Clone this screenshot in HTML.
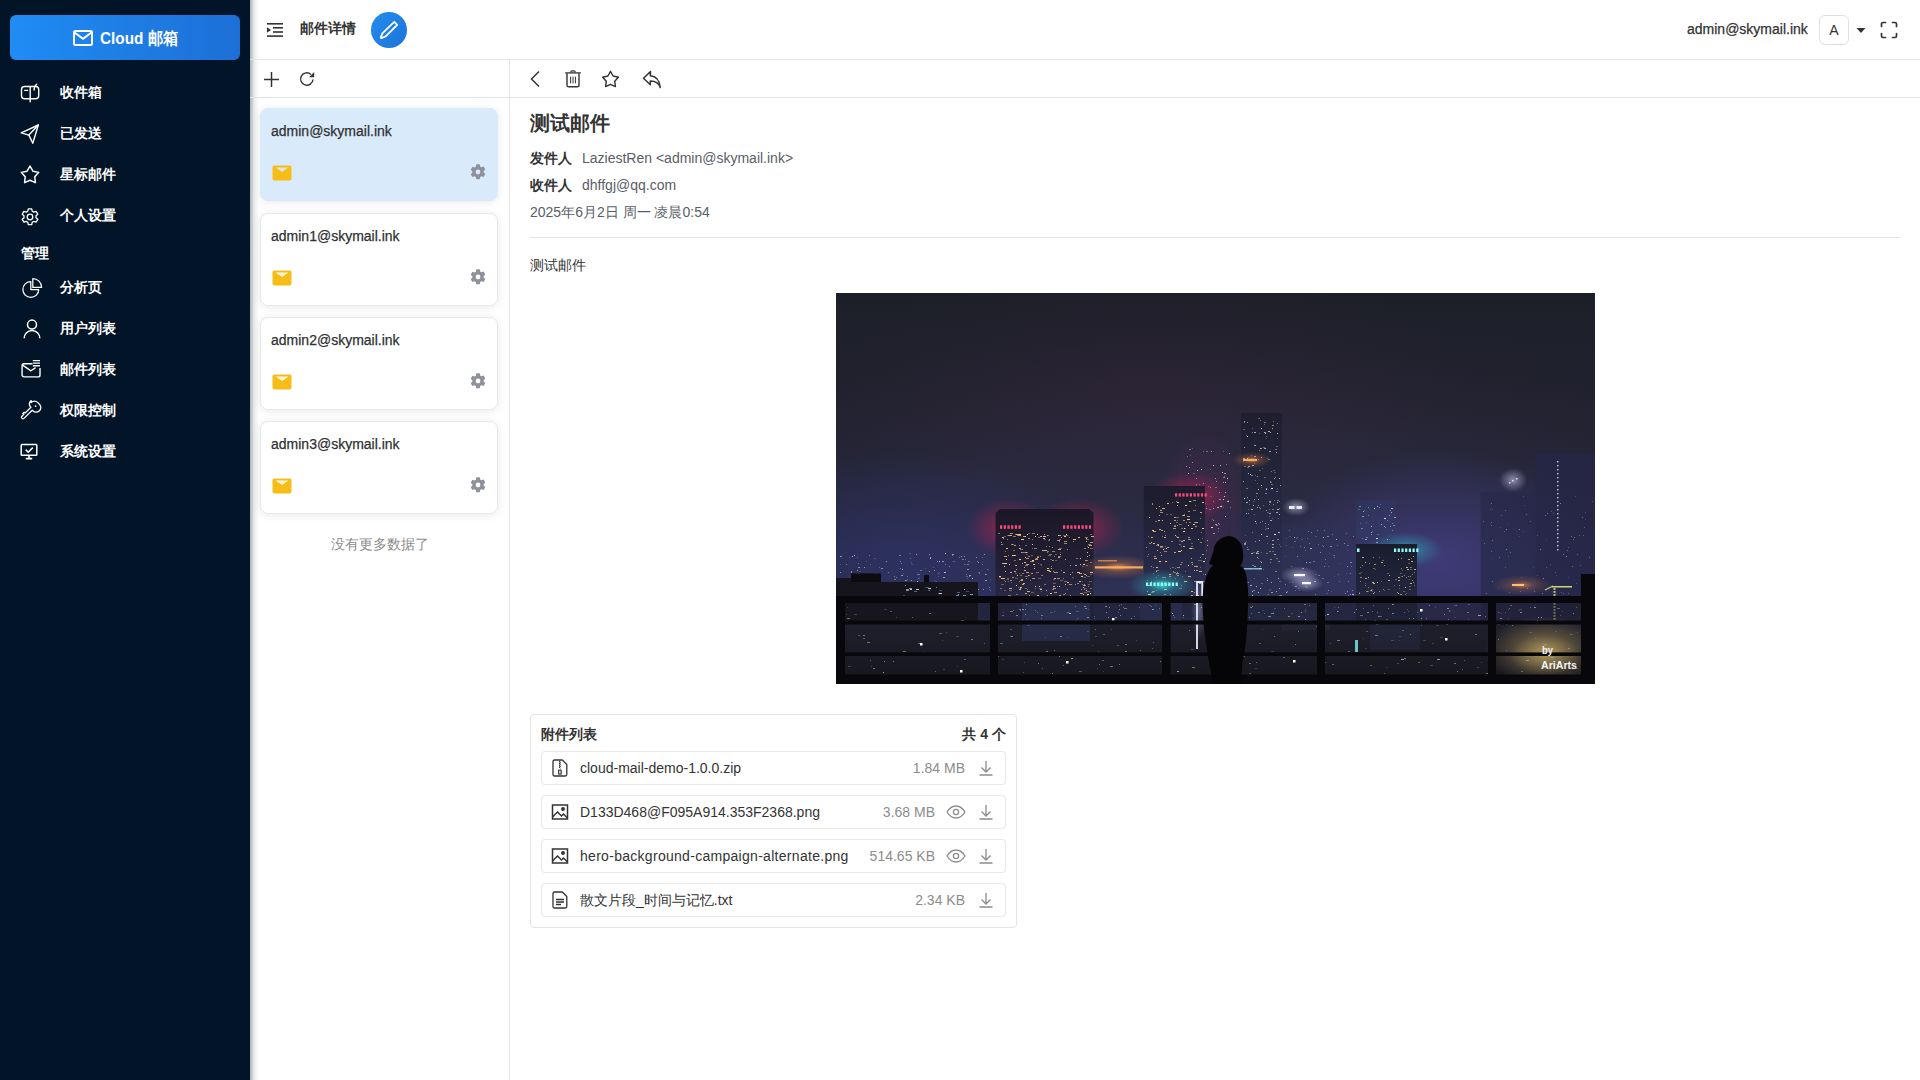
<!DOCTYPE html>
<html><head><meta charset="utf-8">
<style>
*{box-sizing:border-box;margin:0;padding:0}
html,body{width:1920px;height:1080px;overflow:hidden;background:#fff;font-family:"Liberation Sans",sans-serif;color:#303133}
.abs{position:absolute}
#side{position:absolute;left:0;top:0;width:250px;height:1080px;background:#011428}
#logo{position:absolute;left:10px;top:15px;width:230px;height:45px;border-radius:6px;background:linear-gradient(90deg,#1f8cf4,#1d6fd6);color:#fff;font-weight:bold;font-size:17px;display:flex;align-items:center;justify-content:center}
.mi{position:absolute;left:0;width:250px;height:41px;color:#fff;font-size:14px;font-weight:bold}
.mi svg{position:absolute;left:20px;top:10px}
.mi span{position:absolute;left:60px;top:12px}
#shadow{position:absolute;left:250px;top:0;width:9px;height:1080px;background:linear-gradient(90deg,rgba(0,21,41,.32),rgba(0,21,41,.08) 50%,rgba(0,21,41,0))}
.hline{position:absolute;height:1px;background:#e4e4e7}
.card{position:absolute;left:260px;width:238px;height:93px;border-radius:8px;background:#fff;border:1px solid #ebeef5;box-shadow:0 1px 10px rgba(0,0,0,.09)}
.card .em{position:absolute;left:10px;top:17px;font-size:14px;color:#303133}
.att{position:absolute;left:541px;width:465px;height:34px;border:1px solid #e8e8e8;border-radius:4px}
</style></head><body>
<div id="side">
  <div id="logo"></div>
  <svg class="abs" style="left:73px;top:30px" width="20" height="16" viewBox="0 0 20 16"><rect x="1" y="1" width="18" height="14" rx="1.2" fill="none" stroke="#fff" stroke-width="2"/><path d="M1.5 2.5L10 8.8l8.5-6.3" fill="none" stroke="#fff" stroke-width="2"/></svg>
  <div class="abs" style="left:100px;top:27px;font-size:17px;font-weight:bold;color:#fff;transform:scaleX(0.9);transform-origin:0 0;white-space:nowrap">Cloud 邮箱</div>
  <div class="mi" style="top:72px"><svg width="24" height="22" viewBox="0 0 24 22" fill="none" stroke="#fff" stroke-width="1.4" stroke-linecap="round" stroke-linejoin="round"><rect x="1.5" y="4.5" width="17.2" height="12.3" rx="3"/><path d="M10.2 4.8V19.7"/><path d="M14.1 8C14 5.5 15 3.5 16.7 2.2"/><path d="M4.7 8.4h2.9"/></svg><span>收件箱</span></div>
  <div class="mi" style="top:113px"><svg width="24" height="22" viewBox="0 0 24 22" fill="none" stroke="#fff" stroke-width="1.4" stroke-linejoin="round" stroke-linecap="round"><path d="M18.3 2L1.2 9.8l7.7 2.3 3.9 8.1z"/><path d="M18.3 2L8.9 12.1"/></svg><span>已发送</span></div>
  <div class="mi" style="top:154px"><svg width="24" height="22" viewBox="0 0 24 22" fill="none" stroke="#fff" stroke-width="1.5" stroke-linejoin="round"><path d="M10.00 2.00 L12.94 7.15 L18.75 8.36 L14.76 12.75 L15.41 18.64 L10.00 16.20 L4.59 18.64 L5.24 12.75 L1.25 8.36 L7.06 7.15z"/></svg><span>星标邮件</span></div>
  <div class="mi" style="top:195px"><svg style="top:11.5px" width="20" height="20" viewBox="0 0 20 20" fill="none" stroke="#fff" stroke-width="1.3" stroke-linejoin="round"><path d="M8.3 1.8h3.4l.5 2.4 1.6.9 2.3-.8 1.7 2.9-1.8 1.6v1.9l1.8 1.6-1.7 2.9-2.3-.8-1.6.9-.5 2.4H8.3l-.5-2.4-1.6-.9-2.3.8-1.7-2.9 1.8-1.6V8.8L2.2 7.2l1.7-2.9 2.3.8 1.6-.9z"/><circle cx="10" cy="10" r="2.8"/></svg><span>个人设置</span></div>
  <div class="grp" style="position:absolute;left:21px;top:245px;color:#fff;font-size:13.5px;font-weight:bold">管理</div>
  <div class="mi" style="top:267px"><svg width="24" height="22" viewBox="0 0 24 22" fill="none" stroke="#fff" stroke-width="1.25" stroke-linejoin="round"><path d="M10.8 4.6A7.9 7.9 0 1 0 18.7 12.5H10.8z"/><path d="M12.8 1.6A8.8 8.8 0 0 1 21.6 10.4H12.8z"/></svg><span>分析页</span></div>
  <div class="mi" style="top:308px"><svg width="24" height="22" viewBox="0 0 24 22" fill="none" stroke="#fff" stroke-width="1.5"><circle cx="12" cy="6.6" r="4.5"/><path d="M4.2 20.2A7.8 7.8 0 0 1 19.8 20.2"/></svg><span>用户列表</span></div>
  <div class="mi" style="top:349px"><svg width="24" height="22" viewBox="0 0 24 22" fill="none" stroke="#fff" stroke-width="1.4" stroke-linejoin="round"><path d="M12.5 4.8H4.1a2 2 0 0 0-2 2v9.1a2 2 0 0 0 2 2H18a2 2 0 0 0 2-2V9"/><path d="M2.6 6.2L11 11.8l4.6-3.2"/><path d="M12.8 1.6H20M12.8 4.1H20M12.8 6.7H20"/></svg><span>邮件列表</span></div>
  <div class="mi" style="top:390px"><svg width="24" height="22" viewBox="0 0 24 22" fill="none" stroke="#fff" stroke-linejoin="round" stroke-linecap="round"><path d="M11.2 2.6a4.6 4.6 0 0 1 6.6 0l1.6 1.6a4.6 4.6 0 0 1 0 6.6 4.6 4.6 0 0 1-6.6 0l-.6-.6-8.2 8.2a1.3 1.3 0 0 1-1.8 0l-.3-.3a1.3 1.3 0 0 1 0-1.8l1.9-1.9-.9-.9 1.3-1.3.9.9 5.8-5.8-.6-.6a4.6 4.6 0 0 1 .9-6.1z" stroke-width="1.3"/><circle cx="15.6" cy="6.2" r=".9" fill="#fff" stroke="none"/></svg><span>权限控制</span></div>
  <div class="mi" style="top:431px"><svg width="24" height="22" viewBox="0 0 24 22" fill="none" stroke="#fff" stroke-width="1.5"><rect x="1.2" y="3.6" width="15.6" height="10.6" rx=".8"/><path d="M5.6 8.6l2.6 2.6 4.6-4.6"/><path d="M9 14.2v2.6M5.8 17.6h6.4" stroke-width="1.7"/></svg><span>系统设置</span></div>
</div>
<div id="shadow"></div>

<!-- header -->
<svg class="abs" style="left:267px;top:23px" width="16" height="14" viewBox="0 0 16 14"><rect x="0" y="0" width="16" height="1.6" fill="#333"/><rect x="6" y="4" width="10" height="1.6" fill="#333"/><rect x="6" y="8.2" width="10" height="1.6" fill="#333"/><rect x="0" y="12.3" width="16" height="1.6" fill="#333"/><path d="M0 4.3L4 7 0 9.7z" fill="#333"/></svg>
<div class="abs" style="left:300px;top:20px;font-size:14px;font-weight:bold;color:#333">邮件详情</div>
<div class="abs" style="left:371px;top:12px;width:36px;height:36px;border-radius:50%;background:linear-gradient(135deg,#238cf0,#1c74d8)"></div>
<svg class="abs" style="left:379px;top:20px" width="20" height="20" viewBox="0 0 20 20"><path d="M15.2 1.8l3 3L6.5 16.5 2.3 18.2l-.6-.6 1.7-4.2z" fill="none" stroke="#fff" stroke-width="1.8" stroke-linejoin="round"/></svg>
<div class="abs" id="huser" style="left:1687px;top:21px;font-size:14px;color:#333;-webkit-text-stroke:0.25px #333">admin@skymail.ink</div>
<div class="abs" style="left:1819px;top:15px;width:30px;height:30px;border:1px solid #dcdfe6;border-radius:6px;font-size:14px;color:#333;text-align:center;line-height:28px">A</div>
<svg class="abs" style="left:1856px;top:27px" width="10" height="7" viewBox="0 0 10 7"><path d="M0.5 1h9L5 6z" fill="#333"/></svg>
<svg class="abs" style="left:1880px;top:21px" width="18" height="18" viewBox="0 0 18 18" fill="none" stroke="#333" stroke-width="1.7" stroke-linecap="round" stroke-linejoin="round"><path d="M1.5 5.5V3a1.5 1.5 0 0 1 1.5-1.5h2.5M12.5 1.5H15A1.5 1.5 0 0 1 16.5 3v2.5M16.5 12.5V15a1.5 1.5 0 0 1-1.5 1.5h-2.5M5.5 16.5H3A1.5 1.5 0 0 1 1.5 15v-2.5"/></svg>
<div class="hline" style="left:250px;top:59px;width:1670px"></div>
<!-- list toolbar -->
<svg class="abs" style="left:264px;top:72px" width="15" height="15" viewBox="0 0 15 15" stroke="#333" stroke-width="1.5"><path d="M7.5 0v15M0 7.5h15"/></svg>
<svg class="abs" style="left:299px;top:71px" width="16" height="16" viewBox="0 0 16 16" fill="none" stroke="#333" stroke-width="1.4"><path d="M14 8.5A6.2 6.2 0 1 1 12 3.4"/><path d="M15.2 1v5.2H10z" fill="#333" stroke="none"/></svg>
<div class="hline" style="left:250px;top:97px;width:1670px"></div>
<div class="abs" style="left:509px;top:60px;width:1px;height:1020px;background:#e4e4e7"></div>
<div class="card" style="top:108px;background:#d9eafb;border-color:#d9eafb"></div>
<div class="abs" style="left:271px;top:123px;font-size:14px;color:#303133;-webkit-text-stroke:0.25px #303133">admin@skymail.ink</div>
<svg class="abs" style="left:272px;top:165px" width="20" height="16" viewBox="0 0 20 16"><rect x="0.5" y="0.5" width="19" height="15" rx="2" fill="#f6bd16"/><path d="M3.5 2.5h13L10 7z" fill="#d9eafb" opacity=".85"/></svg>
<svg class="abs" style="left:470px;top:164px" width="16" height="16" viewBox="0 0 16 16"><path fill="#8e9199" fill-rule="evenodd" d="M6.3 0.3h3.4l.5 2.2 1.3.75 2.1-.7 1.7 2.95-1.65 1.5v1.5l1.65 1.5-1.7 2.95-2.1-.7-1.3.75-.5 2.2H6.3l-.5-2.2-1.3-.75-2.1.7L.7 10.3l1.65-1.5V7.2L.7 5.7 2.4 2.75l2.1.7 1.3-.75zM8 5.6a2.4 2.4 0 1 0 0 4.8 2.4 2.4 0 0 0 0-4.8z"/></svg>
<div class="card" style="top:212.5px;background:#fff;border-color:#e8e9ee"></div>
<div class="abs" style="left:271px;top:227.5px;font-size:14px;color:#303133;-webkit-text-stroke:0.25px #303133">admin1@skymail.ink</div>
<svg class="abs" style="left:272px;top:269.5px" width="20" height="16" viewBox="0 0 20 16"><rect x="0.5" y="0.5" width="19" height="15" rx="2" fill="#f6bd16"/><path d="M3.5 2.5h13L10 7z" fill="#fff" opacity=".85"/></svg>
<svg class="abs" style="left:470px;top:268.5px" width="16" height="16" viewBox="0 0 16 16"><path fill="#8e9199" fill-rule="evenodd" d="M6.3 0.3h3.4l.5 2.2 1.3.75 2.1-.7 1.7 2.95-1.65 1.5v1.5l1.65 1.5-1.7 2.95-2.1-.7-1.3.75-.5 2.2H6.3l-.5-2.2-1.3-.75-2.1.7L.7 10.3l1.65-1.5V7.2L.7 5.7 2.4 2.75l2.1.7 1.3-.75zM8 5.6a2.4 2.4 0 1 0 0 4.8 2.4 2.4 0 0 0 0-4.8z"/></svg>
<div class="card" style="top:316.5px;background:#fff;border-color:#e8e9ee"></div>
<div class="abs" style="left:271px;top:331.5px;font-size:14px;color:#303133;-webkit-text-stroke:0.25px #303133">admin2@skymail.ink</div>
<svg class="abs" style="left:272px;top:373.5px" width="20" height="16" viewBox="0 0 20 16"><rect x="0.5" y="0.5" width="19" height="15" rx="2" fill="#f6bd16"/><path d="M3.5 2.5h13L10 7z" fill="#fff" opacity=".85"/></svg>
<svg class="abs" style="left:470px;top:372.5px" width="16" height="16" viewBox="0 0 16 16"><path fill="#8e9199" fill-rule="evenodd" d="M6.3 0.3h3.4l.5 2.2 1.3.75 2.1-.7 1.7 2.95-1.65 1.5v1.5l1.65 1.5-1.7 2.95-2.1-.7-1.3.75-.5 2.2H6.3l-.5-2.2-1.3-.75-2.1.7L.7 10.3l1.65-1.5V7.2L.7 5.7 2.4 2.75l2.1.7 1.3-.75zM8 5.6a2.4 2.4 0 1 0 0 4.8 2.4 2.4 0 0 0 0-4.8z"/></svg>
<div class="card" style="top:420.5px;background:#fff;border-color:#e8e9ee"></div>
<div class="abs" style="left:271px;top:435.5px;font-size:14px;color:#303133;-webkit-text-stroke:0.25px #303133">admin3@skymail.ink</div>
<svg class="abs" style="left:272px;top:477.5px" width="20" height="16" viewBox="0 0 20 16"><rect x="0.5" y="0.5" width="19" height="15" rx="2" fill="#f6bd16"/><path d="M3.5 2.5h13L10 7z" fill="#fff" opacity=".85"/></svg>
<svg class="abs" style="left:470px;top:476.5px" width="16" height="16" viewBox="0 0 16 16"><path fill="#8e9199" fill-rule="evenodd" d="M6.3 0.3h3.4l.5 2.2 1.3.75 2.1-.7 1.7 2.95-1.65 1.5v1.5l1.65 1.5-1.7 2.95-2.1-.7-1.3.75-.5 2.2H6.3l-.5-2.2-1.3-.75-2.1.7L.7 10.3l1.65-1.5V7.2L.7 5.7 2.4 2.75l2.1.7 1.3-.75zM8 5.6a2.4 2.4 0 1 0 0 4.8 2.4 2.4 0 0 0 0-4.8z"/></svg>
<div class="abs" style="left:331px;top:536px;font-size:14px;color:#8c8c8c">没有更多数据了</div>

<!-- detail toolbar -->
<svg class="abs" style="left:529px;top:70px" width="12" height="18" viewBox="0 0 12 18" fill="none" stroke="#333" stroke-width="1.5"><path d="M10 1.5L2.5 9l7.5 7.5"/></svg>
<svg class="abs" style="left:564px;top:70px" width="18" height="18" viewBox="0 0 18 18" fill="none" stroke="#333" stroke-linejoin="round"><path d="M1.2 2.9h15.6" stroke-width="1.3"/><path d="M6.8 2.6V2a1.2 1.2 0 0 1 1.2-1.2h2A1.2 1.2 0 0 1 11.2 2v.6" stroke-width="1.2"/><path d="M3 3.2v12a1.6 1.6 0 0 0 1.6 1.6h8.8a1.6 1.6 0 0 0 1.6-1.6v-12" stroke-width="1.4"/><path d="M6.6 6.6v6.8M9 6.6v6.8M11.4 6.6v6.8" stroke-width="1"/></svg>
<svg class="abs" style="left:601px;top:70px" width="19" height="19" viewBox="0 0 19 19" fill="none" stroke="#333" stroke-width="1.4" stroke-linejoin="round"><path d="M9.5 1.3l2.6 4.7 5.3 1.2-3.7 4 .7 5.4-4.9-2.3-4.9 2.3.7-5.4-3.7-4 5.3-1.2z"/></svg>
<svg class="abs" style="left:642px;top:70px" width="20" height="19" viewBox="0 0 20 19" fill="none" stroke="#333" stroke-width="1.5" stroke-linejoin="round"><path d="M8.5 1.5L1.5 8.2l6.8 6.5V11c5 0 8.3 1.5 10 6.5C17.5 10 13.5 6.2 8.3 5.8z"/></svg>
<!-- mail header -->
<div class="abs" style="left:530px;top:110px;font-size:20px;font-weight:bold;color:#333">测试邮件</div>
<div class="abs" style="left:530px;top:150px;font-size:14px;font-weight:bold;color:#333">发件人</div>
<div class="abs" style="left:582px;top:150px;font-size:14px;color:#595e66">LaziestRen &lt;admin@skymail.ink&gt;</div>
<div class="abs" style="left:530px;top:177px;font-size:14px;font-weight:bold;color:#333">收件人</div>
<div class="abs" style="left:582px;top:177px;font-size:14px;color:#595e66">dhffgj@qq.com</div>
<div class="abs" style="left:530px;top:204px;font-size:14px;color:#595e66">2025年6月2日 周一 凌晨0:54</div>
<div class="hline" style="left:530px;top:237px;width:1370px;background:#e6e6e6"></div>
<div class="abs" style="left:530px;top:257px;font-size:14px;color:#333">测试邮件</div>
<div id="img" class="abs" style="left:836px;top:293px;width:759px;height:391px;background:#2a2838;overflow:hidden"><svg width="759" height="391" viewBox="0 0 759 391">
<defs>
<linearGradient id="sky" x1="0" y1="0" x2="0" y2="1">
<stop offset="0" stop-color="#20222c"/><stop offset="0.3" stop-color="#272636"/><stop offset="0.55" stop-color="#2a2a42"/><stop offset="0.75" stop-color="#2e3054"/><stop offset="1" stop-color="#30325c"/></linearGradient>
<radialGradient id="gR"><stop offset="0" stop-color="#ff2a5a" stop-opacity=".75"/><stop offset=".4" stop-color="#d02050" stop-opacity=".35"/><stop offset="1" stop-color="#d02050" stop-opacity="0"/></radialGradient>
<radialGradient id="gT"><stop offset="0" stop-color="#40fff0" stop-opacity=".8"/><stop offset=".4" stop-color="#30c0d0" stop-opacity=".35"/><stop offset="1" stop-color="#30c0d0" stop-opacity="0"/></radialGradient>
<radialGradient id="gO"><stop offset="0" stop-color="#ffa050" stop-opacity=".8"/><stop offset=".4" stop-color="#e08040" stop-opacity=".3"/><stop offset="1" stop-color="#e08040" stop-opacity="0"/></radialGradient>
<radialGradient id="gW"><stop offset="0" stop-color="#e0e0ff" stop-opacity=".55"/><stop offset="1" stop-color="#c0c0e0" stop-opacity="0"/></radialGradient>
<radialGradient id="gY"><stop offset="0" stop-color="#d8b868" stop-opacity=".6"/><stop offset="1" stop-color="#c8a860" stop-opacity="0"/></radialGradient>
<radialGradient id="gP"><stop offset="0" stop-color="#423e82" stop-opacity=".8"/><stop offset="1" stop-color="#423e82" stop-opacity="0"/></radialGradient>
<radialGradient id="gB"><stop offset="0" stop-color="#2c3266" stop-opacity=".7"/><stop offset="1" stop-color="#2c3266" stop-opacity="0"/></radialGradient>
<radialGradient id="gPk"><stop offset="0" stop-color="#6a2a58" stop-opacity=".55"/><stop offset="1" stop-color="#6a2a58" stop-opacity="0"/></radialGradient>
<radialGradient id="vig" cx=".5" cy=".75" r=".75"><stop offset=".55" stop-color="#101018" stop-opacity="0"/><stop offset="1" stop-color="#141820" stop-opacity=".3"/></radialGradient>
<linearGradient id="bA" x1="0" y1="0" x2="0" y2="1"><stop offset="0" stop-color="#1b1726"/><stop offset=".5" stop-color="#231f36"/><stop offset="1" stop-color="#2c2f52"/></linearGradient>
<linearGradient id="bB" x1="0" y1="0" x2="0" y2="1"><stop offset="0" stop-color="#1d1b2c"/><stop offset="1" stop-color="#2e355c"/></linearGradient>
<linearGradient id="bD" x1="0" y1="0" x2="0" y2="1"><stop offset="0" stop-color="#1e1e2e"/><stop offset="1" stop-color="#2e355c"/></linearGradient>
<linearGradient id="bE" x1="0" y1="0" x2="0" y2="1"><stop offset="0" stop-color="#1a1d2e"/><stop offset="1" stop-color="#262c4a"/></linearGradient>
<linearGradient id="low" x1="0" y1="0" x2="0" y2="1"><stop offset="0" stop-color="#1f1f2c"/><stop offset="1" stop-color="#16161d"/></linearGradient>
<filter id="bl2" x="-50%" y="-50%" width="200%" height="200%"><feGaussianBlur stdDeviation="1.5"/></filter>
</defs>
<rect width="759" height="391" fill="url(#sky)"/>
<rect width="759" height="391" fill="url(#vig)"/>
<ellipse cx="64" cy="267" rx="200" ry="110" fill="url(#gB)"/>
<ellipse cx="604" cy="267" rx="170" ry="110" fill="url(#gP)"/>
<ellipse cx="314" cy="87" rx="320" ry="130" fill="url(#gPk)" opacity="0.18"/>
<rect x="644.7" y="199.0" width="54.8" height="133.0" fill="#272948" opacity="0.7"/>
<rect x="699.5" y="161.0" width="60.5" height="171.0" fill="#252746" opacity="0.8"/>
<rect x="721.0" y="168.0" width="1.5" height="1.5" fill="#d8d8f8" opacity="0.85"/>
<rect x="721.0" y="172.0" width="1.5" height="1.5" fill="#d8d8f8" opacity="0.85"/>
<rect x="721.0" y="176.0" width="1.5" height="1.5" fill="#d8d8f8" opacity="0.85"/>
<rect x="721.0" y="180.0" width="1.5" height="1.5" fill="#d8d8f8" opacity="0.85"/>
<rect x="721.0" y="184.0" width="1.5" height="1.5" fill="#d8d8f8" opacity="0.85"/>
<rect x="721.0" y="188.0" width="1.5" height="1.5" fill="#d8d8f8" opacity="0.85"/>
<rect x="721.0" y="192.0" width="1.5" height="1.5" fill="#d8d8f8" opacity="0.85"/>
<rect x="721.0" y="196.0" width="1.5" height="1.5" fill="#d8d8f8" opacity="0.85"/>
<rect x="721.0" y="200.0" width="1.5" height="1.5" fill="#d8d8f8" opacity="0.85"/>
<rect x="721.0" y="204.0" width="1.5" height="1.5" fill="#d8d8f8" opacity="0.85"/>
<rect x="721.0" y="208.0" width="1.5" height="1.5" fill="#d8d8f8" opacity="0.85"/>
<rect x="721.0" y="212.0" width="1.5" height="1.5" fill="#d8d8f8" opacity="0.85"/>
<rect x="721.0" y="216.0" width="1.5" height="1.5" fill="#d8d8f8" opacity="0.85"/>
<rect x="721.0" y="220.0" width="1.5" height="1.5" fill="#d8d8f8" opacity="0.85"/>
<rect x="721.0" y="224.0" width="1.5" height="1.5" fill="#d8d8f8" opacity="0.85"/>
<rect x="721.0" y="228.0" width="1.5" height="1.5" fill="#d8d8f8" opacity="0.85"/>
<rect x="721.0" y="232.0" width="1.5" height="1.5" fill="#d8d8f8" opacity="0.85"/>
<rect x="721.0" y="236.0" width="1.5" height="1.5" fill="#d8d8f8" opacity="0.85"/>
<rect x="721.0" y="240.0" width="1.5" height="1.5" fill="#d8d8f8" opacity="0.85"/>
<rect x="721.0" y="244.0" width="1.5" height="1.5" fill="#d8d8f8" opacity="0.85"/>
<rect x="721.0" y="248.0" width="1.5" height="1.5" fill="#d8d8f8" opacity="0.85"/>
<rect x="721.0" y="252.0" width="1.5" height="1.5" fill="#d8d8f8" opacity="0.85"/>
<rect x="721.0" y="256.0" width="1.5" height="1.5" fill="#d8d8f8" opacity="0.85"/>
<ellipse cx="677" cy="187" rx="14" ry="12" fill="url(#gW)"/>
<rect x="673.0" y="189.0" width="1.5" height="1.5" fill="#e8e8ff" opacity="0.85"/>
<rect x="676.0" y="187.0" width="1.5" height="1.5" fill="#e8e8ff" opacity="0.85"/>
<rect x="680.0" y="185.0" width="1.5" height="1.5" fill="#e8e8ff" opacity="0.85"/>
<ellipse cx="369" cy="212" rx="45" ry="75" fill="url(#gPk)" opacity="0.9"/>
<rect x="346.0" y="149.0" width="49.0" height="183.0" fill="#2e2848" opacity="0.35"/>
<rect x="520.0" y="207.0" width="39.0" height="125.0" fill="#303c66" opacity="0.45"/>
<rect x="446.0" y="232.0" width="74.0" height="100.0" fill="#2d3356" opacity="0.35"/>
<path fill="#e0e0ff" opacity="0.34" d="M71 283h1v1h-1zM132 268h2v1h-2zM129 266h1v1h-1zM109 271h1v1h-1zM133 283h1v1h-1zM74 298h1v1h-1zM154 297h1v1h-1zM83 281h1v1h-1zM149 281h2v1h-2zM74 265h1v1h-1zM39 280h2v1h-2zM17 294h2v1h-2zM124 289h2v1h-2zM61 300h2v1h-2z"/>
<path fill="#8890c8" opacity="0.75" d="M123 264h1v1h-1zM130 281h1v1h-1zM153 294h1v1h-1zM2 295h1v1h-1zM81 281h2v1h-2zM60 284h1v1h-1zM64 268h1v1h-1zM21 281h2v1h-2zM52 279h1v1h-1zM64 275h1v1h-1zM138 296h1v1h-1zM10 271h1v1h-1zM116 262h1v1h-1zM126 266h2v1h-2z"/>
<path fill="#a8b0e0" opacity="0.52" d="M84 297h2v1h-2zM34 298h1v1h-1zM141 268h1v1h-1zM65 270h1v1h-1zM113 273h1v1h-1zM102 280h1v1h-1zM22 270h1v1h-1zM64 290h1v1h-1zM84 277h2v1h-2z"/>
<path fill="#c8b890" opacity="0.75" d="M149 287h2v1h-2zM106 268h2v1h-2zM25 297h2v1h-2zM107 284h2v1h-2zM28 274h1v1h-1zM147 296h1v1h-1zM65 282h2v1h-2zM133 282h2v1h-2zM50 298h1v1h-1zM141 291h1v1h-1zM116 261h2v1h-2z"/>
<path fill="#a8b0e0" opacity="0.75" d="M128 263h1v1h-1zM80 261h1v1h-1zM131 276h2v1h-2zM53 300h1v1h-1zM30 301h1v1h-1zM29 290h1v1h-1zM75 287h1v1h-1zM148 261h1v1h-1zM15 279h1v1h-1zM4 263h2v1h-2zM22 274h2v1h-2zM45 275h2v1h-2zM123 300h1v1h-1zM4 279h1v1h-1zM101 268h1v1h-1zM142 269h1v1h-1zM50 268h1v1h-1zM109 300h1v1h-1zM21 277h1v1h-1zM93 261h1v1h-1zM94 264h1v1h-1zM125 263h1v1h-1zM141 296h2v1h-2z"/>
<path fill="#8890c8" opacity="0.34" d="M93 292h1v1h-1zM103 279h1v1h-1zM19 281h1v1h-1zM23 278h2v1h-2zM153 296h1v1h-1zM98 287h1v1h-1zM32 294h1v1h-1zM89 275h1v1h-1zM73 260h2v1h-2zM4 271h1v1h-1zM75 271h2v1h-2zM99 288h2v1h-2zM38 265h2v1h-2z"/>
<path fill="#a8b0e0" opacity="0.34" d="M151 276h2v1h-2zM75 269h1v1h-1zM128 271h2v1h-2zM71 286h1v1h-1zM42 289h1v1h-1zM109 296h1v1h-1zM102 283h1v1h-1zM154 286h1v1h-1z"/>
<path fill="#8890c8" opacity="0.52" d="M32 288h1v1h-1zM34 271h1v1h-1zM142 279h2v1h-2zM88 296h1v1h-1zM139 300h2v1h-2zM130 283h2v1h-2zM37 288h2v1h-2zM31 284h1v1h-1zM82 285h2v1h-2z"/>
<path fill="#e0e0ff" opacity="0.75" d="M109 260h1v1h-1zM66 276h1v1h-1zM136 285h1v1h-1zM108 279h2v1h-2zM103 268h1v1h-1zM81 288h1v1h-1zM72 298h1v1h-1zM18 262h1v1h-1zM16 263h1v1h-1zM17 293h1v1h-1zM94 265h1v1h-1z"/>
<path fill="#c8b890" opacity="0.34" d="M13 264h1v1h-1zM24 285h1v1h-1zM43 274h1v1h-1zM146 264h1v1h-1zM87 294h2v1h-2zM21 264h1v1h-1zM131 285h1v1h-1zM97 274h1v1h-1zM30 268h1v1h-1zM67 280h1v1h-1zM117 268h2v1h-2z"/>
<path fill="#c8b890" opacity="0.52" d="M58 286h2v1h-2zM26 286h2v1h-2zM58 283h1v1h-1zM85 290h1v1h-1zM143 280h1v1h-1zM146 271h1v1h-1zM79 291h1v1h-1zM5 285h1v1h-1zM63 262h2v1h-2zM33 262h1v1h-1zM131 271h2v1h-2z"/>
<path fill="#e0e0ff" opacity="0.52" d="M140 264h1v1h-1zM15 278h1v1h-1zM149 281h1v1h-1zM93 278h1v1h-1zM98 277h1v1h-1zM69 287h2v1h-2z"/>
<path fill="#8a92c8" opacity="0.55" d="M647 228h1v1h-1zM694 228h1v1h-1zM648 250h1v1h-1zM727 261h1v1h-1zM711 220h1v1h-1zM698 298h1v1h-1zM731 257h1v1h-1zM717 220h1v1h-1zM741 261h1v1h-1zM753 264h1v1h-1z"/>
<path fill="#8a92c8" opacity="0.25" d="M671 230h1v1h-1zM732 284h1v1h-1zM720 282h1v1h-1zM656 265h1v1h-1zM749 226h1v1h-1zM710 247h1v1h-1zM656 216h1v1h-1zM683 243h1v1h-1zM697 274h1v1h-1zM662 294h1v1h-1z"/>
<path fill="#a0a8d8" opacity="0.39" d="M673 299h1v1h-1zM655 258h1v1h-1zM714 271h1v1h-1zM748 234h1v1h-1zM732 254h1v1h-1zM732 300h1v1h-1zM665 222h1v1h-1zM756 208h1v1h-1zM747 242h1v1h-1zM701 242h1v1h-1zM750 290h1v1h-1zM753 297h1v1h-1zM655 232h1v1h-1zM744 272h1v1h-1zM669 274h1v1h-1zM710 274h1v1h-1z"/>
<path fill="#c0c8f0" opacity="0.55" d="M670 236h1v1h-1zM691 295h1v1h-1zM707 285h1v1h-1zM704 256h1v1h-1zM730 263h1v1h-1zM724 210h1v1h-1zM670 256h1v1h-1zM683 236h1v1h-1z"/>
<path fill="#c0c8f0" opacity="0.39" d="M737 246h1v1h-1zM746 224h1v1h-1zM690 221h1v1h-1zM655 210h1v1h-1zM738 244h1v1h-1zM684 298h1v1h-1zM736 273h1v1h-1zM655 229h1v1h-1zM735 243h1v1h-1zM663 264h1v1h-1zM669 217h1v1h-1zM674 259h1v1h-1z"/>
<path fill="#a0a8d8" opacity="0.25" d="M720 300h1v1h-1zM688 212h1v1h-1zM739 203h1v1h-1zM687 238h1v1h-1zM756 281h1v1h-1zM664 234h1v1h-1z"/>
<path fill="#a0a8d8" opacity="0.55" d="M706 300h1v1h-1zM656 247h1v1h-1zM650 300h1v1h-1zM709 222h1v1h-1zM656 288h1v1h-1z"/>
<path fill="#8a92c8" opacity="0.39" d="M701 282h1v1h-1zM687 203h1v1h-1zM719 279h1v1h-1zM743 242h1v1h-1zM725 299h1v1h-1z"/>
<path fill="#c0c8f0" opacity="0.25" d="M740 290h1v1h-1zM668 238h1v1h-1zM654 216h1v1h-1zM685 284h1v1h-1zM715 218h1v1h-1zM672 263h1v1h-1zM727 300h1v1h-1zM749 219h1v1h-1z"/>
<path fill="#f0e0b0" opacity="0.8" d="M389 189h1v1h-1zM359 198h1v1h-1zM386 179h1v1h-1zM391 208h2v1h-2zM365 176h1v1h-1zM358 197h2v1h-2zM351 281h2v1h-2zM360 281h2v1h-2zM377 172h1v1h-1zM376 277h1v1h-1zM361 289h2v1h-2z"/>
<path fill="#ffffff" opacity="0.56" d="M375 275h1v1h-1zM370 215h1v1h-1zM381 288h2v1h-2zM387 189h1v1h-1zM384 172h1v1h-1zM368 221h1v1h-1zM389 199h1v1h-1zM377 290h1v1h-1zM353 218h2v1h-2zM376 274h2v1h-2zM371 252h1v1h-1zM369 281h1v1h-1zM381 214h2v1h-2zM361 177h1v1h-1zM389 249h2v1h-2zM350 234h1v1h-1zM351 223h1v1h-1zM377 215h1v1h-1zM390 278h1v1h-1zM374 194h1v1h-1zM361 302h1v1h-1zM558 224h2v1h-2zM555 215h2v1h-2zM541 213h1v1h-1zM529 246h2v1h-2zM527 218h1v1h-1zM535 233h1v1h-1zM555 219h1v1h-1zM551 246h1v1h-1z"/>
<path fill="#d0b0c0" opacity="0.36" d="M356 301h1v1h-1zM365 235h1v1h-1zM377 258h2v1h-2zM357 180h2v1h-2zM354 266h1v1h-1zM376 226h1v1h-1zM369 210h1v1h-1zM382 289h1v1h-1zM392 207h1v1h-1zM360 192h1v1h-1zM359 202h2v1h-2zM356 155h1v1h-1z"/>
<path fill="#70d0e8" opacity="0.8" d="M387 289h1v1h-1zM383 199h1v1h-1zM359 295h2v1h-2zM361 249h1v1h-1zM369 265h1v1h-1zM365 194h2v1h-2zM393 160h1v1h-1zM349 213h1v1h-1z"/>
<path fill="#ffffff" opacity="0.36" d="M367 158h1v1h-1zM372 193h1v1h-1zM361 265h1v1h-1zM360 229h1v1h-1zM360 191h1v1h-1zM391 283h2v1h-2zM554 290h1v1h-1zM554 217h1v1h-1zM545 292h1v1h-1zM535 241h1v1h-1zM556 237h1v1h-1zM526 292h1v1h-1zM523 213h2v1h-2zM556 258h1v1h-1z"/>
<path fill="#d0b0c0" opacity="0.8" d="M367 203h1v1h-1zM359 198h2v1h-2zM356 301h1v1h-1zM361 235h1v1h-1zM379 231h2v1h-2zM388 180h2v1h-2zM377 240h2v1h-2zM367 208h2v1h-2zM367 190h1v1h-1zM371 247h1v1h-1zM382 230h1v1h-1zM383 206h2v1h-2zM365 300h2v1h-2zM350 282h2v1h-2zM360 185h1v1h-1z"/>
<path fill="#70d0e8" opacity="0.36" d="M374 203h2v1h-2zM378 294h2v1h-2zM382 238h1v1h-1zM356 282h2v1h-2zM362 194h2v1h-2zM368 232h1v1h-1zM387 158h1v1h-1zM367 232h1v1h-1zM362 217h1v1h-1zM373 280h2v1h-2zM354 162h1v1h-1zM354 202h1v1h-1zM374 176h1v1h-1zM385 212h1v1h-1zM387 214h1v1h-1z"/>
<path fill="#ffffff" opacity="0.8" d="M384 213h2v1h-2zM389 223h1v1h-1zM387 206h1v1h-1zM388 203h1v1h-1zM375 234h2v1h-2zM373 281h1v1h-1zM353 281h1v1h-1zM391 185h1v1h-1zM354 280h2v1h-2zM352 217h1v1h-1zM348 235h1v1h-1zM362 280h1v1h-1zM352 180h1v1h-1zM540 245h2v1h-2zM533 279h1v1h-1zM553 282h1v1h-1zM533 272h1v1h-1zM548 225h2v1h-2zM537 256h2v1h-2zM538 215h1v1h-1z"/>
<path fill="#f0e0b0" opacity="0.36" d="M374 289h2v1h-2zM362 276h1v1h-1zM351 163h1v1h-1zM370 158h2v1h-2zM350 217h2v1h-2zM370 257h1v1h-1zM385 299h2v1h-2zM371 293h1v1h-1zM351 227h1v1h-1zM363 209h1v1h-1zM357 246h1v1h-1zM354 202h2v1h-2z"/>
<path fill="#f0e0b0" opacity="0.56" d="M368 289h1v1h-1zM380 188h1v1h-1zM366 242h1v1h-1zM375 158h1v1h-1zM350 173h1v1h-1zM389 257h1v1h-1zM377 227h1v1h-1zM377 208h1v1h-1zM351 219h1v1h-1zM379 185h1v1h-1zM356 169h1v1h-1zM358 225h2v1h-2zM353 174h1v1h-1z"/>
<path fill="#d0b0c0" opacity="0.56" d="M380 232h2v1h-2zM384 272h1v1h-1zM394 267h1v1h-1zM374 290h1v1h-1zM392 283h2v1h-2zM353 156h2v1h-2zM380 298h1v1h-1zM387 184h2v1h-2zM381 214h2v1h-2zM351 223h1v1h-1zM349 232h2v1h-2zM382 235h1v1h-1z"/>
<path fill="#70d0e8" opacity="0.56" d="M388 183h1v1h-1zM357 299h2v1h-2zM350 213h2v1h-2zM373 216h2v1h-2zM381 289h1v1h-1zM383 231h1v1h-1zM390 171h1v1h-1zM363 191h1v1h-1zM361 263h1v1h-1zM394 214h1v1h-1zM379 194h2v1h-2zM366 273h1v1h-1z"/>
<path fill="#60c8e0" opacity="0.8" d="M534 260h1v1h-1zM532 214h1v1h-1zM529 296h1v1h-1zM540 302h1v1h-1zM558 262h2v1h-2zM526 223h2v1h-2zM544 290h1v1h-1z"/>
<path fill="#60c8e0" opacity="0.56" d="M534 280h2v1h-2zM537 300h1v1h-1zM541 290h1v1h-1zM557 232h2v1h-2zM550 256h1v1h-1zM532 222h1v1h-1zM546 252h1v1h-1zM545 275h1v1h-1zM530 244h2v1h-2zM523 290h1v1h-1zM537 262h1v1h-1z"/>
<path fill="#90c0e8" opacity="0.36" d="M550 293h1v1h-1zM541 241h2v1h-2zM533 269h2v1h-2zM532 291h1v1h-1zM544 211h1v1h-1zM547 283h2v1h-2zM524 230h1v1h-1zM541 261h1v1h-1z"/>
<path fill="#60c8e0" opacity="0.36" d="M536 296h1v1h-1zM557 296h2v1h-2zM546 250h1v1h-1zM530 229h1v1h-1zM522 216h2v1h-2zM534 294h2v1h-2zM528 217h1v1h-1zM546 283h2v1h-2zM525 284h1v1h-1zM527 262h1v1h-1zM530 284h2v1h-2zM536 238h1v1h-1zM546 292h2v1h-2z"/>
<path fill="#90c0e8" opacity="0.56" d="M549 251h1v1h-1zM551 227h1v1h-1zM556 230h1v1h-1zM543 214h1v1h-1zM525 235h2v1h-2zM554 233h1v1h-1zM549 234h1v1h-1zM526 245h1v1h-1z"/>
<path fill="#90c0e8" opacity="0.8" d="M553 222h1v1h-1zM548 233h1v1h-1zM556 267h1v1h-1zM535 239h1v1h-1zM540 249h2v1h-2zM545 231h1v1h-1zM549 266h2v1h-2zM557 302h1v1h-1zM539 292h1v1h-1zM526 295h1v1h-1z"/>
<path fill="#a8b0d8" opacity="0.27" d="M449 263h1v1h-1zM493 260h1v1h-1zM450 245h1v1h-1zM450 299h2v1h-2zM465 246h2v1h-2zM470 294h2v1h-2zM479 281h2v1h-2zM511 257h1v1h-1zM463 297h1v1h-1zM450 252h1v1h-1zM456 254h1v1h-1z"/>
<path fill="#70b8d8" opacity="0.27" d="M490 300h2v1h-2zM492 273h2v1h-2zM448 285h1v1h-1zM479 286h1v1h-1zM479 243h2v1h-2zM453 243h2v1h-2zM498 283h1v1h-1zM495 298h1v1h-1zM504 270h1v1h-1zM489 270h1v1h-1zM456 289h2v1h-2zM510 280h1v1h-1z"/>
<path fill="#ffffff" opacity="0.6" d="M474 255h2v1h-2zM470 269h1v1h-1zM500 246h1v1h-1zM478 288h2v1h-2zM516 301h2v1h-2zM450 299h1v1h-1zM487 244h1v1h-1zM458 244h1v1h-1z"/>
<path fill="#ffffff" opacity="0.42" d="M508 250h1v1h-1zM449 291h1v1h-1zM489 266h1v1h-1zM461 263h1v1h-1zM511 298h1v1h-1zM468 254h1v1h-1zM514 269h2v1h-2zM466 275h2v1h-2zM484 259h1v1h-1zM494 253h2v1h-2zM511 273h1v1h-1z"/>
<path fill="#a8b0d8" opacity="0.42" d="M496 241h1v1h-1zM515 273h1v1h-1zM471 245h1v1h-1zM497 262h2v1h-2zM469 293h2v1h-2zM455 273h1v1h-1zM477 268h2v1h-2zM511 252h2v1h-2zM459 297h1v1h-1zM502 281h1v1h-1zM501 252h1v1h-1zM462 295h1v1h-1z"/>
<path fill="#70b8d8" opacity="0.42" d="M468 303h1v1h-1zM486 252h1v1h-1zM453 289h1v1h-1zM460 245h1v1h-1zM512 302h1v1h-1zM503 288h1v1h-1z"/>
<path fill="#a8b0d8" opacity="0.6" d="M492 297h1v1h-1zM491 243h2v1h-2zM487 253h1v1h-1zM459 293h2v1h-2zM514 280h1v1h-1zM473 269h2v1h-2zM514 301h1v1h-1zM509 300h1v1h-1zM516 297h1v1h-1zM475 239h1v1h-1z"/>
<path fill="#70b8d8" opacity="0.6" d="M481 237h1v1h-1zM451 298h1v1h-1zM488 273h1v1h-1zM479 301h1v1h-1zM517 243h1v1h-1zM512 288h1v1h-1zM482 282h2v1h-2zM473 250h1v1h-1zM488 237h1v1h-1zM472 238h1v1h-1z"/>
<path fill="#ffffff" opacity="0.27" d="M464 253h1v1h-1zM498 264h1v1h-1zM482 251h1v1h-1zM486 285h2v1h-2zM510 240h1v1h-1zM453 237h1v1h-1zM491 289h2v1h-2zM458 248h2v1h-2zM469 257h1v1h-1zM461 244h1v1h-1z"/>
<ellipse cx="172" cy="235" rx="42" ry="30" fill="url(#gR)"/>
<ellipse cx="242" cy="235" rx="46" ry="30" fill="url(#gR)"/>
<path d="M159.5 332V220L164 216H253L257.5 220V332z" fill="url(#bA)"/>
<path fill="#c8b8a0" opacity="0.66" d="M216 258h3v1h-3zM221 247h3v1h-3zM216 267h2v1h-2zM167 245h1v1h-1zM186 259h2v1h-2zM250 282h1v1h-1zM211 302h1v1h-1zM169 258h1v1h-1zM172 302h3v1h-3zM196 268h2v1h-2zM253 262h1v1h-1zM248 292h2v1h-2zM231 256h1v1h-1zM165 251h2v1h-2zM198 255h3v1h-3zM183 252h1v1h-1zM239 291h1v1h-1zM215 273h1v1h-1zM216 254h1v1h-1zM234 302h1v1h-1zM186 256h1v1h-1zM172 262h1v1h-1zM210 253h1v1h-1zM204 263h1v1h-1zM248 255h2v1h-2zM200 279h1v1h-1zM221 293h1v1h-1zM211 242h1v1h-1zM192 263h2v1h-2zM241 290h2v1h-2zM171 246h1v1h-1z"/>
<path fill="#ffd888" opacity="0.95" d="M250 245h1v1h-1zM199 243h1v1h-1zM214 300h2v1h-2zM173 271h1v1h-1zM228 243h2v1h-2zM183 266h2v1h-2zM208 243h2v1h-2zM183 241h2v1h-2zM196 267h2v1h-2zM211 275h2v1h-2zM180 292h1v1h-1zM163 283h2v1h-2zM181 282h1v1h-1zM222 242h1v1h-1zM189 264h1v1h-1zM244 271h1v1h-1zM176 262h3v1h-3zM188 243h2v1h-2zM168 273h1v1h-1zM196 251h1v1h-1zM168 270h3v1h-3zM247 271h2v1h-2zM250 297h1v1h-1zM245 283h2v1h-2zM251 301h2v1h-2zM191 241h1v1h-1zM252 254h1v1h-1zM254 300h1v1h-1zM185 246h3v1h-3zM170 266h1v1h-1zM251 259h1v1h-1z"/>
<path fill="#ffd888" opacity="0.66" d="M248 303h1v1h-1zM178 252h2v1h-2zM217 278h1v1h-1zM185 286h2v1h-2zM225 244h1v1h-1zM223 302h2v1h-2zM196 285h3v1h-3zM247 292h2v1h-2zM217 295h3v1h-3zM190 271h3v1h-3zM213 246h1v1h-1zM187 290h2v1h-2zM198 303h2v1h-2zM174 240h3v1h-3zM224 261h1v1h-1zM229 266h1v1h-1zM218 279h3v1h-3zM220 279h2v1h-2z"/>
<path fill="#c8b8a0" opacity="0.95" d="M195 305h2v1h-2zM208 257h1v1h-1zM188 274h1v1h-1zM184 296h1v1h-1zM183 296h2v1h-2zM183 255h2v1h-2zM206 257h3v1h-3zM188 277h2v1h-2zM166 270h3v1h-3zM173 295h3v1h-3zM191 298h3v1h-3zM218 285h2v1h-2zM234 281h1v1h-1zM207 266h2v1h-2zM255 243h3v1h-3zM239 272h2v1h-2zM227 279h2v1h-2zM222 264h2v1h-2zM208 241h1v1h-1zM210 297h1v1h-1zM215 275h1v1h-1zM253 252h3v1h-3zM222 264h1v1h-1zM167 285h2v1h-2zM179 262h1v1h-1zM189 259h2v1h-2zM204 243h2v1h-2zM173 242h3v1h-3zM178 278h2v1h-2zM207 245h2v1h-2zM174 279h2v1h-2zM209 257h2v1h-2z"/>
<path fill="#f0c870" opacity="0.43" d="M180 301h2v1h-2zM183 280h1v1h-1zM171 286h2v1h-2zM223 255h3v1h-3zM181 242h1v1h-1zM196 255h1v1h-1zM189 295h2v1h-2zM188 259h1v1h-1zM208 246h2v1h-2zM254 281h2v1h-2zM173 297h3v1h-3zM190 259h2v1h-2zM230 242h2v1h-2zM211 242h2v1h-2zM251 298h3v1h-3zM228 288h3v1h-3zM184 256h2v1h-2zM202 244h2v1h-2zM195 262h2v1h-2zM254 295h2v1h-2zM248 284h2v1h-2zM212 247h2v1h-2z"/>
<path fill="#f0c870" opacity="0.95" d="M199 293h1v1h-1zM201 302h2v1h-2zM192 282h1v1h-1zM188 269h2v1h-2zM184 294h2v1h-2zM247 301h1v1h-1zM220 303h2v1h-2zM201 241h1v1h-1zM166 244h2v1h-2zM251 263h1v1h-1zM180 241h3v1h-3zM213 278h2v1h-2zM242 244h2v1h-2zM247 294h1v1h-1zM223 293h1v1h-1zM198 275h1v1h-1zM207 243h1v1h-1zM231 289h2v1h-2zM176 251h1v1h-1zM244 265h1v1h-1zM241 279h3v1h-3zM204 296h2v1h-2zM237 246h3v1h-3zM211 277h3v1h-3zM170 255h2v1h-2zM229 291h1v1h-1zM197 271h2v1h-2zM217 293h2v1h-2zM203 293h1v1h-1zM254 279h3v1h-3zM243 288h2v1h-2zM230 241h1v1h-1zM250 248h1v1h-1zM165 285h3v1h-3z"/>
<path fill="#d8a860" opacity="0.66" d="M179 241h1v1h-1zM186 280h2v1h-2zM211 259h1v1h-1zM190 285h1v1h-1zM227 285h1v1h-1zM192 282h2v1h-2zM218 263h1v1h-1zM200 265h2v1h-2zM225 277h1v1h-1zM162 240h2v1h-2zM249 267h3v1h-3zM213 253h1v1h-1zM174 279h1v1h-1zM216 296h2v1h-2zM196 246h1v1h-1zM172 242h2v1h-2zM222 263h3v1h-3zM252 251h3v1h-3zM227 301h2v1h-2zM231 296h1v1h-1zM175 251h3v1h-3zM184 282h2v1h-2zM249 244h3v1h-3zM183 288h1v1h-1zM205 282h2v1h-2zM196 240h3v1h-3zM189 272h3v1h-3zM211 258h2v1h-2zM177 243h3v1h-3z"/>
<path fill="#d8a860" opacity="0.43" d="M220 261h1v1h-1zM214 266h2v1h-2zM171 285h2v1h-2zM191 283h1v1h-1zM182 294h1v1h-1zM179 285h3v1h-3zM248 299h3v1h-3zM202 285h3v1h-3zM252 291h2v1h-2zM251 253h1v1h-1zM217 286h2v1h-2zM224 259h1v1h-1zM227 242h3v1h-3zM247 280h1v1h-1zM191 296h1v1h-1zM246 288h1v1h-1zM163 284h2v1h-2zM199 295h1v1h-1zM253 288h3v1h-3zM219 267h2v1h-2zM236 284h2v1h-2zM205 272h1v1h-1zM179 280h2v1h-2zM195 299h3v1h-3zM248 295h3v1h-3zM168 297h2v1h-2zM190 261h2v1h-2z"/>
<path fill="#ffd888" opacity="0.43" d="M250 272h2v1h-2zM202 270h1v1h-1zM233 244h1v1h-1zM208 291h2v1h-2zM246 303h1v1h-1zM254 255h3v1h-3zM250 246h3v1h-3zM254 241h2v1h-2zM194 287h1v1h-1zM250 282h1v1h-1zM189 283h2v1h-2zM220 299h1v1h-1zM177 257h2v1h-2zM201 279h2v1h-2zM246 291h1v1h-1zM213 261h3v1h-3zM201 263h2v1h-2zM240 265h2v1h-2zM223 248h1v1h-1zM254 269h2v1h-2zM252 293h1v1h-1zM194 304h3v1h-3zM178 267h2v1h-2zM164 295h2v1h-2z"/>
<path fill="#c8b8a0" opacity="0.43" d="M172 288h1v1h-1zM246 273h2v1h-2zM251 283h3v1h-3zM199 265h2v1h-2zM204 271h2v1h-2zM246 303h1v1h-1zM217 290h3v1h-3zM189 252h2v1h-2zM212 262h3v1h-3zM221 247h3v1h-3zM192 240h2v1h-2zM249 267h2v1h-2zM184 287h3v1h-3zM171 242h2v1h-2zM224 287h3v1h-3zM203 295h3v1h-3zM251 302h1v1h-1zM219 261h1v1h-1zM165 291h3v1h-3zM168 243h2v1h-2zM223 246h2v1h-2zM175 289h1v1h-1zM198 273h1v1h-1zM172 303h1v1h-1zM168 287h1v1h-1zM205 298h1v1h-1zM218 293h1v1h-1z"/>
<path fill="#d8a860" opacity="0.95" d="M185 287h2v1h-2zM248 281h2v1h-2zM186 291h2v1h-2zM182 242h3v1h-3zM254 249h3v1h-3zM199 266h3v1h-3zM185 259h1v1h-1zM223 242h2v1h-2zM195 280h2v1h-2zM180 276h1v1h-1zM186 270h1v1h-1zM179 272h2v1h-2zM184 295h1v1h-1zM222 256h3v1h-3zM165 249h1v1h-1zM169 278h1v1h-1zM189 300h2v1h-2zM187 243h2v1h-2zM243 280h3v1h-3zM168 263h3v1h-3zM190 279h3v1h-3zM245 300h2v1h-2zM201 264h2v1h-2z"/>
<path fill="#f0c870" opacity="0.66" d="M174 287h2v1h-2zM233 291h3v1h-3zM187 290h2v1h-2zM192 245h2v1h-2zM248 291h1v1h-1zM228 248h3v1h-3zM194 268h3v1h-3zM228 250h3v1h-3zM176 284h2v1h-2zM190 265h3v1h-3zM229 300h1v1h-1zM193 302h1v1h-1zM191 304h1v1h-1zM244 300h1v1h-1zM221 285h3v1h-3zM234 272h1v1h-1zM236 279h1v1h-1zM248 296h1v1h-1zM245 296h1v1h-1zM218 299h3v1h-3zM237 248h1v1h-1zM169 288h1v1h-1z"/>
<rect x="164.0" y="232.3" width="2.2" height="3.5" fill="#ff4a78"/>
<rect x="167.7" y="232.3" width="2.2" height="3.5" fill="#ff4a78"/>
<rect x="171.4" y="232.3" width="2.2" height="3.5" fill="#ff4a78"/>
<rect x="175.1" y="232.3" width="2.2" height="3.5" fill="#ff4a78"/>
<rect x="178.8" y="232.3" width="2.2" height="3.5" fill="#ff4a78"/>
<rect x="182.5" y="232.3" width="2.2" height="3.5" fill="#ff4a78"/>
<rect x="227.0" y="232.3" width="2.2" height="3.5" fill="#ff4a78"/>
<rect x="230.7" y="232.3" width="2.2" height="3.5" fill="#ff4a78"/>
<rect x="234.4" y="232.3" width="2.2" height="3.5" fill="#ff4a78"/>
<rect x="238.1" y="232.3" width="2.2" height="3.5" fill="#ff4a78"/>
<rect x="241.8" y="232.3" width="2.2" height="3.5" fill="#ff4a78"/>
<rect x="245.5" y="232.3" width="2.2" height="3.5" fill="#ff4a78"/>
<rect x="249.2" y="232.3" width="2.2" height="3.5" fill="#ff4a78"/>
<rect x="252.9" y="232.3" width="2.2" height="3.5" fill="#ff4a78"/>
<ellipse cx="282" cy="274" rx="40" ry="12" fill="url(#gO)"/>
<rect x="259.0" y="273.3" width="48.0" height="2.2" fill="#ffb060" opacity="0.95"/>
<rect x="262.0" y="267.0" width="19.0" height="1.5" fill="#e89858" opacity="0.75"/>
<ellipse cx="354" cy="203" rx="40" ry="24" fill="url(#gR)"/>
<rect x="307.7" y="193.0" width="61.3" height="139.0" fill="url(#bB)"/>
<path fill="#f0c870" opacity="0.95" d="M345 257h1v1h-1zM320 274h2v1h-2zM341 244h2v1h-2zM315 249h1v1h-1zM322 227h2v1h-2zM317 250h2v1h-2zM326 227h1v1h-1zM339 242h1v1h-1zM366 209h2v1h-2zM355 298h2v1h-2zM362 246h1v1h-1zM348 288h3v1h-3zM329 268h2v1h-2zM331 210h2v1h-2zM333 281h2v1h-2zM355 235h2v1h-2zM353 208h2v1h-2z"/>
<path fill="#d8b080" opacity="0.95" d="M328 290h1v1h-1zM330 291h1v1h-1zM363 290h2v1h-2zM320 278h1v1h-1zM318 265h3v1h-3zM312 292h2v1h-2zM315 244h2v1h-2zM364 219h2v1h-2zM360 273h2v1h-2zM352 283h3v1h-3zM328 244h2v1h-2zM353 255h3v1h-3zM317 238h3v1h-3zM323 236h2v1h-2zM323 213h1v1h-1zM321 257h1v1h-1zM320 215h1v1h-1zM338 224h2v1h-2zM347 247h2v1h-2zM324 217h2v1h-2zM356 271h1v1h-1zM361 302h2v1h-2zM363 278h3v1h-3zM345 248h2v1h-2zM338 259h2v1h-2zM325 262h1v1h-1zM347 253h2v1h-2zM326 215h3v1h-3z"/>
<path fill="#ffd888" opacity="0.95" d="M327 256h1v1h-1zM341 212h1v1h-1zM357 231h2v1h-2zM366 235h2v1h-2zM341 209h2v1h-2zM343 258h2v1h-2zM367 268h2v1h-2zM330 255h1v1h-1zM351 226h3v1h-3zM323 268h2v1h-2zM354 255h2v1h-2zM352 232h1v1h-1zM334 230h1v1h-1zM347 238h2v1h-2zM342 258h2v1h-2zM349 212h2v1h-2zM348 235h1v1h-1zM316 237h2v1h-2zM313 224h1v1h-1zM312 301h3v1h-3zM328 296h3v1h-3zM322 252h1v1h-1zM352 272h1v1h-1z"/>
<path fill="#ffd888" opacity="0.43" d="M359 212h1v1h-1zM343 251h2v1h-2zM360 298h2v1h-2zM367 281h1v1h-1zM319 228h2v1h-2zM315 288h1v1h-1zM312 243h1v1h-1zM341 227h1v1h-1zM335 304h2v1h-2zM338 232h2v1h-2zM362 302h1v1h-1zM355 255h3v1h-3zM347 222h2v1h-2zM353 229h2v1h-2zM348 221h1v1h-1zM312 261h1v1h-1zM348 235h2v1h-2zM315 299h1v1h-1zM334 275h1v1h-1zM357 217h3v1h-3zM316 299h2v1h-2zM329 253h1v1h-1z"/>
<path fill="#ffd888" opacity="0.66" d="M359 229h3v1h-3zM324 253h3v1h-3zM321 251h2v1h-2zM364 264h1v1h-1zM316 298h3v1h-3zM341 282h2v1h-2zM358 273h3v1h-3zM355 302h2v1h-2zM366 261h2v1h-2zM359 233h2v1h-2zM338 227h2v1h-2zM311 298h1v1h-1zM355 265h1v1h-1zM333 283h2v1h-2zM314 289h1v1h-1zM346 222h3v1h-3zM328 238h1v1h-1zM341 232h1v1h-1zM338 233h2v1h-2zM325 237h2v1h-2zM360 277h2v1h-2zM337 235h3v1h-3zM347 227h2v1h-2zM351 223h3v1h-3zM358 277h1v1h-1zM315 289h1v1h-1z"/>
<path fill="#d8b080" opacity="0.66" d="M313 250h2v1h-2zM345 292h1v1h-1zM358 299h1v1h-1zM324 217h1v1h-1zM320 284h1v1h-1zM315 273h1v1h-1zM337 278h1v1h-1zM326 284h3v1h-3zM357 207h3v1h-3zM328 301h2v1h-2zM335 248h2v1h-2zM365 239h1v1h-1zM316 210h1v1h-1zM349 304h1v1h-1zM364 249h2v1h-2zM310 254h1v1h-1zM328 258h3v1h-3zM340 243h1v1h-1zM336 209h1v1h-1zM344 271h2v1h-2zM324 259h1v1h-1zM327 284h3v1h-3zM341 279h1v1h-1zM340 208h1v1h-1zM352 283h2v1h-2zM364 225h1v1h-1zM317 274h1v1h-1z"/>
<path fill="#f0c870" opacity="0.66" d="M350 229h1v1h-1zM334 301h1v1h-1zM358 288h2v1h-2zM318 263h2v1h-2zM341 292h1v1h-1zM323 222h1v1h-1zM331 254h2v1h-2zM316 211h1v1h-1zM340 280h3v1h-3zM324 219h3v1h-3zM352 246h3v1h-3zM329 242h1v1h-1zM341 274h3v1h-3zM355 269h2v1h-2zM328 296h1v1h-1zM352 218h2v1h-2zM352 244h2v1h-2z"/>
<path fill="#f0c870" opacity="0.43" d="M358 229h3v1h-3zM349 278h1v1h-1zM311 263h1v1h-1zM345 235h2v1h-2zM326 243h1v1h-1zM343 231h3v1h-3zM366 245h1v1h-1zM355 253h2v1h-2zM336 274h2v1h-2zM320 277h3v1h-3zM345 253h1v1h-1zM324 254h3v1h-3zM311 287h1v1h-1zM337 279h3v1h-3zM340 229h2v1h-2zM343 295h3v1h-3zM364 274h1v1h-1zM320 297h1v1h-1zM320 252h2v1h-2zM340 281h1v1h-1zM339 275h1v1h-1zM317 280h1v1h-1zM345 269h2v1h-2z"/>
<path fill="#d8b080" opacity="0.43" d="M341 304h3v1h-3zM362 267h3v1h-3zM321 303h2v1h-2zM327 294h1v1h-1zM365 267h1v1h-1zM340 224h3v1h-3zM330 221h2v1h-2zM355 250h2v1h-2zM334 221h2v1h-2zM328 255h1v1h-1zM339 285h1v1h-1zM366 288h3v1h-3zM343 247h2v1h-2zM322 282h1v1h-1zM355 208h1v1h-1zM346 283h1v1h-1zM323 289h1v1h-1z"/>
<rect x="339.0" y="200.3" width="2.2" height="3.3" fill="#ff4a78"/>
<rect x="342.7" y="200.3" width="2.2" height="3.3" fill="#ff4a78"/>
<rect x="346.4" y="200.3" width="2.2" height="3.3" fill="#ff4a78"/>
<rect x="350.1" y="200.3" width="2.2" height="3.3" fill="#ff4a78"/>
<rect x="353.8" y="200.3" width="2.2" height="3.3" fill="#ff4a78"/>
<rect x="357.5" y="200.3" width="2.2" height="3.3" fill="#ff4a78"/>
<rect x="361.2" y="200.3" width="2.2" height="3.3" fill="#ff4a78"/>
<rect x="364.9" y="200.3" width="2.2" height="3.3" fill="#ff4a78"/>
<rect x="368.6" y="200.3" width="2.2" height="3.3" fill="#ff4a78"/>
<ellipse cx="326" cy="292" rx="34" ry="16" fill="url(#gT)"/>
<rect x="310.0" y="289.5" width="2.2" height="3.5" fill="#8ffff5"/>
<rect x="313.7" y="289.5" width="2.2" height="3.5" fill="#8ffff5"/>
<rect x="317.4" y="289.5" width="2.2" height="3.5" fill="#8ffff5"/>
<rect x="321.1" y="289.5" width="2.2" height="3.5" fill="#8ffff5"/>
<rect x="324.8" y="289.5" width="2.2" height="3.5" fill="#8ffff5"/>
<rect x="328.5" y="289.5" width="2.2" height="3.5" fill="#8ffff5"/>
<rect x="332.2" y="289.5" width="2.2" height="3.5" fill="#8ffff5"/>
<rect x="335.9" y="289.5" width="2.2" height="3.5" fill="#8ffff5"/>
<rect x="339.6" y="289.5" width="2.2" height="3.5" fill="#8ffff5"/>
<rect x="405.0" y="120.0" width="41.0" height="212.0" fill="url(#bD)"/>
<path fill="#e8c888" opacity="0.85" d="M413 207h1v1h-1zM418 139h2v1h-2zM425 192h1v1h-1zM425 241h1v1h-1zM432 138h2v1h-2zM422 196h1v1h-1zM420 260h1v1h-1zM424 295h1v1h-1zM441 140h1v1h-1zM441 216h2v1h-2zM414 275h1v1h-1zM416 302h1v1h-1zM416 172h2v1h-2zM415 216h2v1h-2zM425 164h1v1h-1zM425 269h1v1h-1zM415 260h2v1h-2zM417 212h1v1h-1z"/>
<path fill="#ffffff" opacity="0.59" d="M428 139h2v1h-2zM443 185h1v1h-1zM421 264h1v1h-1zM429 230h1v1h-1zM420 293h1v1h-1zM440 219h2v1h-2zM434 139h1v1h-1zM438 185h1v1h-1zM434 227h2v1h-2zM440 159h1v1h-1zM422 299h1v1h-1zM442 239h1v1h-1zM436 251h2v1h-2zM442 285h1v1h-1zM431 287h1v1h-1zM408 128h1v1h-1zM410 209h2v1h-2zM425 135h1v1h-1zM412 173h2v1h-2zM416 298h1v1h-1zM418 206h1v1h-1zM422 206h1v1h-1zM443 221h1v1h-1z"/>
<path fill="#ffffff" opacity="0.38" d="M443 208h1v1h-1zM441 246h2v1h-2zM433 258h2v1h-2zM426 303h1v1h-1zM409 249h1v1h-1zM439 184h1v1h-1zM428 129h2v1h-2zM433 211h1v1h-1zM434 189h2v1h-2zM431 285h1v1h-1zM420 259h1v1h-1zM436 254h1v1h-1zM424 273h1v1h-1z"/>
<path fill="#d8a878" opacity="0.59" d="M423 214h1v1h-1zM434 269h1v1h-1zM424 155h1v1h-1zM424 127h1v1h-1zM422 212h1v1h-1zM411 254h1v1h-1zM441 207h2v1h-2zM430 260h2v1h-2zM437 128h1v1h-1zM424 229h1v1h-1zM408 129h1v1h-1zM439 156h2v1h-2zM440 298h1v1h-1zM440 265h2v1h-2zM424 268h1v1h-1zM439 278h2v1h-2zM410 195h2v1h-2zM426 228h1v1h-1zM432 166h2v1h-2zM416 239h1v1h-1z"/>
<path fill="#a8b8e0" opacity="0.38" d="M429 236h1v1h-1zM420 203h1v1h-1zM423 140h1v1h-1zM417 259h2v1h-2zM412 216h1v1h-1zM412 164h1v1h-1zM430 235h2v1h-2zM440 153h2v1h-2zM410 248h1v1h-1zM418 221h1v1h-1zM407 136h2v1h-2zM415 162h1v1h-1zM419 187h1v1h-1zM428 131h1v1h-1zM419 182h1v1h-1zM411 174h2v1h-2zM421 190h1v1h-1zM431 250h1v1h-1zM409 289h1v1h-1zM443 288h2v1h-2zM407 168h1v1h-1zM430 145h1v1h-1zM418 285h1v1h-1zM427 154h2v1h-2zM427 276h1v1h-1zM431 219h2v1h-2z"/>
<path fill="#d8a878" opacity="0.38" d="M433 297h1v1h-1zM413 211h1v1h-1zM436 225h1v1h-1zM425 290h2v1h-2zM416 135h1v1h-1zM441 195h1v1h-1zM438 179h2v1h-2zM444 253h1v1h-1zM431 301h2v1h-2zM408 294h1v1h-1zM430 143h1v1h-1zM433 209h2v1h-2zM437 177h2v1h-2zM422 265h1v1h-1zM441 145h1v1h-1zM434 296h1v1h-1zM417 208h1v1h-1zM443 251h1v1h-1zM418 170h1v1h-1zM409 242h1v1h-1z"/>
<path fill="#d8a878" opacity="0.85" d="M436 135h1v1h-1zM424 155h2v1h-2zM408 250h2v1h-2zM436 247h2v1h-2zM421 214h1v1h-1zM432 235h1v1h-1zM433 220h2v1h-2zM433 208h2v1h-2zM430 243h2v1h-2zM430 195h1v1h-1zM435 299h2v1h-2zM421 260h2v1h-2zM430 217h1v1h-1z"/>
<path fill="#a8b8e0" opacity="0.85" d="M418 273h2v1h-2zM407 188h1v1h-1zM428 155h2v1h-2zM442 239h2v1h-2zM429 140h1v1h-1zM418 152h2v1h-2zM414 292h2v1h-2zM433 158h2v1h-2zM411 204h1v1h-1zM412 180h1v1h-1zM435 289h1v1h-1zM410 220h1v1h-1zM441 209h1v1h-1zM407 165h2v1h-2zM418 163h2v1h-2zM443 295h1v1h-1zM438 261h2v1h-2zM444 192h1v1h-1zM408 154h1v1h-1zM421 258h2v1h-2zM423 247h1v1h-1z"/>
<path fill="#e8c888" opacity="0.38" d="M429 233h1v1h-1zM425 259h1v1h-1zM436 195h1v1h-1zM408 173h2v1h-2zM427 304h1v1h-1zM431 165h1v1h-1zM427 212h1v1h-1zM433 216h1v1h-1zM421 259h1v1h-1zM443 302h1v1h-1zM440 298h1v1h-1zM442 225h1v1h-1zM438 207h1v1h-1zM428 184h2v1h-2zM410 142h1v1h-1zM436 258h2v1h-2zM433 223h1v1h-1zM422 166h1v1h-1zM422 125h2v1h-2zM425 194h1v1h-1zM426 175h1v1h-1zM435 191h2v1h-2zM423 177h2v1h-2z"/>
<path fill="#a8b8e0" opacity="0.59" d="M444 302h2v1h-2zM436 216h2v1h-2zM411 289h2v1h-2zM434 209h1v1h-1zM434 188h1v1h-1zM416 272h2v1h-2zM435 178h1v1h-1zM415 182h2v1h-2zM440 198h2v1h-2zM420 230h1v1h-1zM416 139h1v1h-1zM425 303h2v1h-2zM411 256h2v1h-2zM423 275h2v1h-2zM429 200h2v1h-2zM417 297h2v1h-2zM443 215h1v1h-1z"/>
<path fill="#e8c888" opacity="0.59" d="M421 183h1v1h-1zM424 215h1v1h-1zM423 157h1v1h-1zM436 132h2v1h-2zM419 248h1v1h-1zM436 254h2v1h-2zM412 220h1v1h-1zM436 132h1v1h-1zM411 129h1v1h-1zM434 266h2v1h-2zM437 211h1v1h-1zM442 268h2v1h-2zM408 251h2v1h-2zM425 241h1v1h-1zM441 130h1v1h-1zM432 231h1v1h-1zM420 200h2v1h-2z"/>
<path fill="#ffffff" opacity="0.85" d="M411 143h1v1h-1zM408 205h1v1h-1zM430 196h1v1h-1zM438 241h2v1h-2zM411 165h1v1h-1zM423 275h2v1h-2zM414 181h1v1h-1zM419 228h1v1h-1zM435 195h2v1h-2z"/>
<ellipse cx="416" cy="167" rx="20" ry="8" fill="url(#gO)"/>
<rect x="407.0" y="166.0" width="14.0" height="2.0" fill="#ffb060" opacity="0.95"/>
<rect x="407.0" y="275.0" width="19.0" height="1.5" fill="#a0d8f0" opacity="0.8"/>
<rect x="453.0" y="213.0" width="5.5" height="3.0" fill="#f8f8ff"/>
<rect x="460.5" y="213.0" width="5.5" height="3.0" fill="#f8f8ff"/>
<ellipse cx="460" cy="214" rx="14" ry="9" fill="url(#gW)"/>
<ellipse cx="463.5" cy="282" rx="19" ry="9" fill="url(#gW)"/>
<rect x="458.0" y="281.0" width="11.0" height="2.2" fill="#f8f8ff"/>
<ellipse cx="470.5" cy="290" rx="17" ry="9" fill="url(#gW)"/>
<rect x="466.0" y="289.0" width="9.0" height="2.2" fill="#f8f8ff"/>
<ellipse cx="569" cy="257" rx="38" ry="18" fill="url(#gT)"/>
<rect x="520.0" y="251.0" width="61.0" height="81.0" fill="url(#bE)"/>
<path fill="#e8c070" opacity="0.9" d="M562 266h1v1h-1zM552 287h2v1h-2zM571 276h2v1h-2zM578 276h2v1h-2zM562 300h1v1h-1zM570 274h2v1h-2zM526 264h2v1h-2zM569 294h1v1h-1zM575 268h2v1h-2zM537 290h2v1h-2zM553 282h1v1h-1zM541 289h1v1h-1zM537 300h1v1h-1zM568 304h2v1h-2zM535 297h1v1h-1zM562 284h2v1h-2zM574 290h2v1h-2z"/>
<path fill="#e8c070" opacity="0.63" d="M576 281h1v1h-1zM578 279h1v1h-1zM523 300h1v1h-1zM548 272h1v1h-1zM529 292h1v1h-1zM538 271h2v1h-2zM524 288h1v1h-1zM564 301h2v1h-2zM574 283h1v1h-1zM565 275h1v1h-1zM563 292h1v1h-1zM568 282h1v1h-1zM561 299h1v1h-1zM565 265h1v1h-1zM530 298h2v1h-2z"/>
<path fill="#d8b880" opacity="0.63" d="M532 294h1v1h-1zM526 272h1v1h-1zM524 274h1v1h-1zM570 284h1v1h-1zM524 284h2v1h-2zM538 299h1v1h-1zM576 287h1v1h-1zM523 300h1v1h-1zM572 283h1v1h-1zM534 297h2v1h-2zM543 298h1v1h-1zM547 296h1v1h-1zM577 289h1v1h-1zM537 264h1v1h-1zM533 270h1v1h-1z"/>
<path fill="#e8c070" opacity="0.41" d="M569 301h1v1h-1zM570 300h1v1h-1zM546 267h2v1h-2zM574 274h2v1h-2zM537 275h2v1h-2zM525 279h1v1h-1zM572 270h2v1h-2zM558 292h1v1h-1zM565 305h1v1h-1zM539 276h1v1h-1zM575 265h1v1h-1zM523 280h2v1h-2zM573 293h2v1h-2zM578 292h1v1h-1zM566 283h1v1h-1zM573 296h2v1h-2zM567 298h2v1h-2z"/>
<path fill="#d8b880" opacity="0.9" d="M572 266h2v1h-2zM577 263h1v1h-1zM529 285h2v1h-2zM545 269h2v1h-2zM532 284h1v1h-1zM536 289h2v1h-2zM562 287h2v1h-2zM529 269h1v1h-1z"/>
<path fill="#d8b880" opacity="0.41" d="M552 296h2v1h-2zM551 280h2v1h-2zM565 283h2v1h-2zM573 286h1v1h-1zM543 264h1v1h-1zM574 276h2v1h-2zM535 296h2v1h-2zM559 286h2v1h-2zM563 295h1v1h-1zM531 298h2v1h-2zM564 280h2v1h-2zM566 277h1v1h-1zM574 274h1v1h-1zM548 297h1v1h-1zM545 288h1v1h-1zM523 299h1v1h-1zM529 290h1v1h-1zM536 298h1v1h-1z"/>
<rect x="558.0" y="255.5" width="2.2" height="3.5" fill="#8ffff5"/>
<rect x="561.7" y="255.5" width="2.2" height="3.5" fill="#8ffff5"/>
<rect x="565.4" y="255.5" width="2.2" height="3.5" fill="#8ffff5"/>
<rect x="569.1" y="255.5" width="2.2" height="3.5" fill="#8ffff5"/>
<rect x="572.8" y="255.5" width="2.2" height="3.5" fill="#8ffff5"/>
<rect x="576.5" y="255.5" width="2.2" height="3.5" fill="#8ffff5"/>
<rect x="580.2" y="255.5" width="2.2" height="3.5" fill="#8ffff5"/>
<rect x="521.0" y="255.5" width="2.5" height="3.5" fill="#8ffff5"/>
<ellipse cx="686" cy="292" rx="30" ry="10" fill="url(#gO)" opacity="0.8"/>
<rect x="676.0" y="291.0" width="12.0" height="2.0" fill="#ffc070"/>
<rect x="716.0" y="293.0" width="20.0" height="1.5" fill="#e0e878" opacity="0.9"/>
<path d="M709 297L717 293" stroke="#e0e878" stroke-width="1.2" opacity=".9"/>
<rect x="717.5" y="295.0" width="2.0" height="1.8" fill="#e8e878" opacity="0.85"/>
<rect x="717.5" y="298.0" width="2.0" height="1.8" fill="#e8e878" opacity="0.85"/>
<rect x="717.5" y="301.0" width="2.0" height="1.8" fill="#e8e878" opacity="0.85"/>
<rect x="717.5" y="304.0" width="2.0" height="1.8" fill="#e8e878" opacity="0.85"/>
<rect x="717.5" y="307.0" width="2.0" height="1.8" fill="#e8e878" opacity="0.85"/>
<rect x="717.5" y="310.0" width="2.0" height="1.8" fill="#e8e878" opacity="0.85"/>
<rect x="717.5" y="313.0" width="2.0" height="1.8" fill="#e8e878" opacity="0.85"/>
<rect x="717.5" y="316.0" width="2.0" height="1.8" fill="#e8e878" opacity="0.85"/>
<rect x="717.5" y="319.0" width="2.0" height="1.8" fill="#e8e878" opacity="0.85"/>
<rect x="717.5" y="322.0" width="2.0" height="1.8" fill="#e8e878" opacity="0.85"/>
<rect x="717.5" y="325.0" width="2.0" height="1.8" fill="#e8e878" opacity="0.85"/>
<rect x="717.5" y="328.0" width="2.0" height="1.8" fill="#e8e878" opacity="0.85"/>
<rect x="717.5" y="331.0" width="2.0" height="1.8" fill="#e8e878" opacity="0.85"/>
<rect x="717.5" y="334.0" width="2.0" height="1.8" fill="#e8e878" opacity="0.85"/>
<rect x="717.5" y="337.0" width="2.0" height="1.8" fill="#e8e878" opacity="0.85"/>
<rect x="717.5" y="340.0" width="2.0" height="1.8" fill="#e8e878" opacity="0.85"/>
<rect x="717.5" y="343.0" width="2.0" height="1.8" fill="#e8e878" opacity="0.85"/>
<rect x="717.5" y="346.0" width="2.0" height="1.8" fill="#e8e878" opacity="0.85"/>
<rect x="717.5" y="349.0" width="2.0" height="1.8" fill="#e8e878" opacity="0.85"/>
<rect x="717.5" y="352.0" width="2.0" height="1.8" fill="#e8e878" opacity="0.85"/>
<rect x="717.5" y="355.0" width="2.0" height="1.8" fill="#e8e878" opacity="0.85"/>
<path d="M0 285H15V280.6H45V289H88V282H93V289H142V332H0z" fill="#16151d"/>
<rect x="15.0" y="280.6" width="30.0" height="8.4" fill="#0c0c10"/>
<rect x="88.0" y="282.0" width="5.0" height="7.0" fill="#0c0c10"/>
<path fill="#8090b0" opacity="0.59" d="M121 299h3v1h-3zM125 304h3v1h-3zM92 297h2v1h-2z"/>
<path fill="#e8e8ff" opacity="0.59" d="M73 295h3v1h-3zM134 301h3v1h-3zM99 303h3v1h-3zM70 296h2v1h-2zM70 297h3v1h-3z"/>
<path fill="#8090b0" opacity="0.85" d="M68 303h2v1h-2zM120 302h3v1h-3zM100 294h1v1h-1zM72 296h1v1h-1z"/>
<path fill="#60b0f0" opacity="0.85" d="M122 301h1v1h-1zM127 302h3v1h-3zM111 304h3v1h-3zM123 303h3v1h-3zM69 292h1v1h-1z"/>
<path fill="#e8e8ff" opacity="0.85" d="M80 296h3v1h-3zM74 296h2v1h-2zM103 300h3v1h-3zM92 295h3v1h-3zM128 296h1v1h-1z"/>
<path fill="#60b0f0" opacity="0.38" d="M130 298h3v1h-3zM103 297h3v1h-3zM89 294h3v1h-3zM67 302h2v1h-2zM93 297h1v1h-1z"/>
<path fill="#8090b0" opacity="0.38" d="M91 294h2v1h-2z"/>
<path fill="#e8e8ff" opacity="0.38" d="M102 300h3v1h-3z"/>
<path fill="#60b0f0" opacity="0.59" d="M78 298h3v1h-3z"/>
<rect x="0.0" y="331.0" width="759.0" height="61.0" fill="url(#low)"/>
<rect x="142.0" y="310.0" width="617.0" height="21.0" fill="#1a1a26" opacity="0.5"/>
<rect x="0.0" y="310.0" width="142.0" height="21.0" fill="#17161f"/>
<rect x="186.0" y="310.0" width="68.0" height="38.0" fill="#323e68" opacity="0.45"/>
<rect x="304.0" y="310.0" width="42.0" height="21.0" fill="#2e3658" opacity="0.45"/>
<ellipse cx="709" cy="357" rx="60" ry="34" fill="url(#gY)"/>
<ellipse cx="709" cy="362" rx="35" ry="20" fill="url(#gY)" opacity="0.8"/>
<rect x="534.0" y="327.0" width="50.0" height="30.0" fill="#2a3050" opacity="0.35"/>
<rect x="446.0" y="317.0" width="48.0" height="20.0" fill="#2a2e44" opacity="0.4"/>
<path fill="#c8a870" opacity="0.32" d="M672 325h1v1h-1zM385 320h2v1h-2zM376 327h1v1h-1zM662 319h2v1h-2zM571 316h1v1h-1zM252 316h1v1h-1zM726 318h1v1h-1zM482 325h1v1h-1zM665 320h1v1h-1z"/>
<path fill="#c8a870" opacity="0.7" d="M531 319h2v1h-2zM279 324h2v1h-2zM180 322h2v1h-2zM452 323h2v1h-2zM416 313h1v1h-1zM251 324h2v1h-2zM295 325h1v1h-1zM465 319h1v1h-1z"/>
<path fill="#60c8f0" opacity="0.7" d="M577 325h1v1h-1zM284 322h1v1h-1zM410 318h1v1h-1zM371 321h1v1h-1zM737 320h1v1h-1zM520 316h1v1h-1zM664 325h2v1h-2zM283 316h1v1h-1zM189 321h1v1h-1zM404 314h1v1h-1zM593 312h1v1h-1zM556 320h2v1h-2zM190 311h1v1h-1z"/>
<path fill="#60c8f0" opacity="0.32" d="M672 316h1v1h-1zM682 317h1v1h-1zM191 326h1v1h-1zM433 323h1v1h-1zM437 319h1v1h-1zM319 312h1v1h-1zM469 316h1v1h-1zM313 312h2v1h-2zM347 324h1v1h-1zM632 326h1v1h-1zM618 312h2v1h-2zM400 324h1v1h-1zM502 318h1v1h-1z"/>
<path fill="#f0f0ff" opacity="0.49" d="M698 314h2v1h-2zM186 316h2v1h-2zM270 319h1v1h-1zM407 314h2v1h-2zM611 315h2v1h-2zM556 311h2v1h-2zM358 311h2v1h-2zM518 319h1v1h-1zM273 314h1v1h-1zM337 322h1v1h-1zM249 315h2v1h-2z"/>
<path fill="#c8a870" opacity="0.49" d="M568 319h1v1h-1zM315 313h1v1h-1zM282 319h1v1h-1zM544 323h2v1h-2zM189 316h1v1h-1zM740 314h1v1h-1zM658 314h1v1h-1zM674 312h2v1h-2z"/>
<path fill="#f0f0ff" opacity="0.32" d="M502 314h1v1h-1zM199 317h1v1h-1zM287 314h1v1h-1zM283 312h1v1h-1zM303 314h1v1h-1zM536 318h1v1h-1zM448 315h1v1h-1zM631 319h1v1h-1zM613 317h1v1h-1z"/>
<path fill="#a8b8e0" opacity="0.49" d="M422 319h2v1h-2zM468 311h2v1h-2zM581 319h1v1h-1zM473 312h1v1h-1zM298 323h1v1h-1zM649 323h1v1h-1zM240 327h1v1h-1zM231 319h2v1h-2zM338 324h1v1h-1zM541 319h1v1h-1z"/>
<path fill="#60c8f0" opacity="0.49" d="M527 315h1v1h-1zM205 325h1v1h-1zM184 317h1v1h-1zM323 315h1v1h-1zM415 320h1v1h-1zM538 327h2v1h-2zM285 311h1v1h-1zM590 325h1v1h-1zM673 315h1v1h-1zM537 312h1v1h-1zM620 312h1v1h-1zM428 320h1v1h-1zM239 313h1v1h-1z"/>
<path fill="#a8b8e0" opacity="0.32" d="M167 319h1v1h-1zM613 318h2v1h-2zM550 326h2v1h-2zM484 322h2v1h-2zM572 318h1v1h-1zM632 311h2v1h-2zM438 315h2v1h-2zM201 319h1v1h-1zM404 312h1v1h-1zM258 325h1v1h-1z"/>
<path fill="#a8b8e0" opacity="0.7" d="M702 324h1v1h-1zM462 323h2v1h-2zM248 313h2v1h-2zM608 321h1v1h-1zM585 325h1v1h-1zM684 319h2v1h-2zM316 316h2v1h-2zM684 319h1v1h-1zM272 324h1v1h-1zM365 314h1v1h-1zM701 327h1v1h-1zM705 324h1v1h-1z"/>
<path fill="#f0f0ff" opacity="0.7" d="M347 322h1v1h-1zM233 320h2v1h-2zM336 320h1v1h-1zM491 321h2v1h-2z"/>
<path fill="#8898b8" opacity="0.27" d="M587 347h3v1h-3zM300 347h1v1h-1zM435 358h3v1h-3zM457 353h1v1h-1zM186 326h1v1h-1zM48 316h3v1h-3zM478 360h2v1h-2zM701 356h3v1h-3zM153 331h3v1h-3zM121 373h1v1h-1zM11 314h1v1h-1zM529 355h2v1h-2zM618 324h2v1h-2zM206 361h2v1h-2zM527 345h1v1h-1z"/>
<path fill="#c8a870" opacity="0.6" d="M82 350h2v1h-2zM27 342h2v1h-2zM289 358h2v1h-2zM304 357h1v1h-1zM356 374h3v1h-3zM487 380h1v1h-1zM373 344h3v1h-3zM610 331h2v1h-2zM93 320h2v1h-2zM574 341h1v1h-1zM174 318h3v1h-3zM288 315h3v1h-3zM632 319h1v1h-1zM573 325h1v1h-1zM219 360h2v1h-2zM11 325h3v1h-3zM413 370h2v1h-2zM512 328h3v1h-3zM650 380h3v1h-3zM259 336h1v1h-1zM414 314h2v1h-2zM618 370h2v1h-2zM328 348h1v1h-1zM67 358h3v1h-3z"/>
<path fill="#60c8f0" opacity="0.42" d="M267 341h2v1h-2zM27 345h2v1h-2zM243 378h3v1h-3zM720 357h1v1h-1zM670 357h1v1h-1zM386 346h3v1h-3zM162 363h1v1h-1zM154 314h3v1h-3zM407 350h1v1h-1zM548 380h1v1h-1zM329 359h2v1h-2zM740 375h2v1h-2zM22 342h2v1h-2zM164 350h3v1h-3zM218 318h1v1h-1zM530 338h2v1h-2zM258 323h1v1h-1zM128 366h2v1h-2z"/>
<path fill="#c8a870" opacity="0.42" d="M534 372h2v1h-2zM407 363h2v1h-2zM206 375h1v1h-1zM103 340h3v1h-3zM266 367h2v1h-2zM316 355h1v1h-1zM423 350h2v1h-2zM394 351h3v1h-3zM487 369h3v1h-3zM529 326h1v1h-1zM444 330h1v1h-1zM699 345h1v1h-1z"/>
<path fill="#c8a870" opacity="0.27" d="M419 375h2v1h-2zM110 339h1v1h-1zM159 359h2v1h-2zM596 350h2v1h-2zM241 325h2v1h-2zM398 329h1v1h-1zM555 347h3v1h-3zM550 374h1v1h-1zM120 343h3v1h-3zM408 318h2v1h-2zM232 344h1v1h-1zM12 373h3v1h-3zM741 339h1v1h-1zM661 331h3v1h-3zM356 327h1v1h-1zM166 366h2v1h-2zM106 347h1v1h-1zM563 343h2v1h-2zM188 369h1v1h-1zM214 319h3v1h-3zM35 373h1v1h-1zM685 360h3v1h-3zM450 331h1v1h-1zM683 316h3v1h-3z"/>
<path fill="#a8b8e0" opacity="0.27" d="M734 341h3v1h-3zM604 344h3v1h-3zM355 356h3v1h-3zM262 358h1v1h-1zM10 321h1v1h-1zM261 375h1v1h-1zM406 335h1v1h-1zM427 317h1v1h-1zM335 319h1v1h-1zM498 314h1v1h-1zM704 327h1v1h-1zM641 374h2v1h-2zM485 378h2v1h-2zM60 324h1v1h-1zM561 370h2v1h-2zM107 376h2v1h-2zM159 364h3v1h-3zM240 318h3v1h-3z"/>
<path fill="#a8b8e0" opacity="0.42" d="M708 351h3v1h-3zM447 364h2v1h-2zM317 349h1v1h-1zM227 372h1v1h-1zM376 315h1v1h-1zM34 367h1v1h-1zM727 369h1v1h-1zM582 369h2v1h-2zM469 318h1v1h-1zM721 315h3v1h-3zM409 332h1v1h-1zM719 371h3v1h-3zM175 343h2v1h-2zM54 318h2v1h-2zM480 333h1v1h-1zM566 337h2v1h-2zM694 314h1v1h-1z"/>
<path fill="#60c8f0" opacity="0.6" d="M639 341h1v1h-1zM494 330h1v1h-1zM218 357h1v1h-1zM652 369h1v1h-1zM263 371h1v1h-1zM57 368h1v1h-1zM324 368h1v1h-1zM446 329h2v1h-2zM408 341h2v1h-2zM154 323h1v1h-1zM715 364h3v1h-3zM438 343h1v1h-1zM539 342h3v1h-3zM135 346h2v1h-2z"/>
<path fill="#a8b8e0" opacity="0.6" d="M542 323h2v1h-2zM216 380h1v1h-1zM217 330h1v1h-1zM601 361h1v1h-1zM690 367h3v1h-3zM353 337h1v1h-1zM676 332h1v1h-1zM432 323h3v1h-3zM329 353h1v1h-1zM224 343h2v1h-2zM37 375h2v1h-2zM413 324h1v1h-1zM48 368h1v1h-1zM125 327h3v1h-3zM274 373h3v1h-3z"/>
<path fill="#f0f0ff" opacity="0.42" d="M223 363h1v1h-1zM210 358h2v1h-2zM283 371h1v1h-1zM269 313h2v1h-2zM621 378h1v1h-1zM389 340h2v1h-2zM183 316h2v1h-2zM435 320h3v1h-3zM568 365h2v1h-2zM31 349h3v1h-3zM662 346h1v1h-1zM501 347h3v1h-3zM231 360h1v1h-1zM205 322h2v1h-2zM202 370h1v1h-1zM462 338h1v1h-1z"/>
<path fill="#8898b8" opacity="0.42" d="M187 379h1v1h-1zM599 314h1v1h-1zM88 359h1v1h-1zM706 351h2v1h-2zM174 336h2v1h-2zM281 352h2v1h-2zM259 343h2v1h-2zM280 324h1v1h-1zM494 350h1v1h-1z"/>
<path fill="#8898b8" opacity="0.6" d="M524 322h3v1h-3zM99 378h1v1h-1zM155 379h1v1h-1zM640 341h1v1h-1zM612 326h1v1h-1zM552 315h1v1h-1zM459 351h1v1h-1zM177 317h1v1h-1zM670 331h1v1h-1zM496 371h2v1h-2zM289 351h2v1h-2zM626 376h1v1h-1zM76 324h1v1h-1zM166 322h2v1h-2zM512 358h2v1h-2zM727 377h1v1h-1zM420 369h1v1h-1zM489 322h1v1h-1z"/>
<path fill="#f0f0ff" opacity="0.6" d="M501 318h1v1h-1zM642 322h3v1h-3zM386 358h3v1h-3zM47 379h1v1h-1zM184 330h1v1h-1zM235 365h2v1h-2zM373 336h1v1h-1zM341 378h2v1h-2zM565 366h3v1h-3zM469 326h1v1h-1zM601 366h3v1h-3z"/>
<path fill="#60c8f0" opacity="0.27" d="M426 336h1v1h-1zM594 372h3v1h-3zM669 319h1v1h-1zM357 325h1v1h-1zM600 332h3v1h-3zM406 340h2v1h-2zM615 330h2v1h-2zM645 369h1v1h-1zM275 336h1v1h-1zM693 339h3v1h-3zM18 321h3v1h-3zM267 378h1v1h-1zM191 332h3v1h-3zM734 370h1v1h-1zM251 338h2v1h-2zM256 352h1v1h-1zM724 322h1v1h-1zM563 347h1v1h-1zM455 320h2v1h-2zM209 344h1v1h-1zM719 338h2v1h-2z"/>
<path fill="#f0f0ff" opacity="0.27" d="M585 332h1v1h-1zM174 343h3v1h-3zM148 350h1v1h-1zM413 380h2v1h-2zM540 331h3v1h-3zM685 378h2v1h-2zM732 355h2v1h-2zM628 367h1v1h-1z"/>
<rect x="124.0" y="377.0" width="2.5" height="2.5" fill="#ffffff"/>
<rect x="230.0" y="368.0" width="2.5" height="2.5" fill="#ffffff"/>
<rect x="276.0" y="325.0" width="2.5" height="2.5" fill="#ffffff"/>
<rect x="457.0" y="367.0" width="2.5" height="2.5" fill="#ffffff"/>
<rect x="584.0" y="316.0" width="2.5" height="2.5" fill="#ffffff"/>
<rect x="609.0" y="345.0" width="2.5" height="2.5" fill="#ffffff"/>
<rect x="84.0" y="350.0" width="2.5" height="2.5" fill="#ffffff"/>
<rect x="519.0" y="347.0" width="3.0" height="12.0" fill="#80f0f0" opacity="0.8"/>
<path d="M361 356V289H366.20000000000005V307" fill="none" stroke="#e8ecff" stroke-width="1.8"/>
<ellipse cx="363" cy="317" rx="8" ry="30" fill="url(#gW)" opacity="0.6"/>
<rect x="0.0" y="303.0" width="759.0" height="7.0" fill="#08080c"/>
<rect x="0.0" y="327.5" width="759.0" height="4.0" fill="#08080c"/>
<rect x="0.0" y="359.4" width="759.0" height="3.6" fill="#08080c"/>
<rect x="0.0" y="381.5" width="759.0" height="10.5" fill="#08080c"/>
<rect x="0.0" y="303.0" width="9.0" height="89.0" fill="#08080c"/>
<rect x="154.0" y="303.0" width="8.0" height="89.0" fill="#08080c"/>
<rect x="326.0" y="303.0" width="8.6" height="89.0" fill="#08080c"/>
<rect x="481.0" y="303.0" width="8.0" height="89.0" fill="#08080c"/>
<rect x="652.0" y="303.0" width="8.0" height="89.0" fill="#08080c"/>
<rect x="745.0" y="281.0" width="14.0" height="111.0" fill="#08080c"/>
<path d="M393.0 243.0 C400.0 243.5 405.5 249.0 406.5 256.0 C407.5 262.0 407.5 267.0 405.5 271.5 L404.0 272.5 L407.0 274.5 C410.0 278.0 412.0 287.0 412.2 302.0 C412.0 327.0 410.5 352.0 406.5 369.0 L404.5 393.0 L378.0 393.0 C373.0 372.0 369.0 347.0 367.5 327.0 C366.0 312.0 366.5 299.0 368.0 293.0 C369.5 285.0 372.0 278.0 375.0 274.5 L377.0 272.3 L373.0 270.7 C375.0 265.0 377.5 259.0 377.8 256.0 C378.0 251.0 384.0 243.5 393.0 243.0z" fill="#050508"/>
<text x="706" y="361" font-family="Liberation Sans" font-weight="bold" font-size="11" fill="#f4f4f4" transform="translate(105.9 0) scale(0.85 1)">by</text>
<text x="705" y="376" font-family="Liberation Sans" font-weight="bold" font-size="11.5" fill="#f4f4f4" textLength="36" lengthAdjust="spacingAndGlyphs">AriArts</text>
</svg></div><!--img-->
<!-- attachments -->
<div class="abs" style="left:530px;top:714px;width:487px;height:214px;border:1px solid #e4e4e4;border-radius:4px"></div>
<div class="abs" style="left:541px;top:726px;font-size:14px;font-weight:bold;color:#333">附件列表</div>
<div class="abs" style="right:914px;top:726px;font-size:14px;font-weight:bold;color:#333">共 4 个</div>
<div class="att" style="top:751px"></div>
<div class="abs" style="left:580px;top:760px;font-size:14px;color:#333">cloud-mail-demo-1.0.0.zip</div>
<div class="abs" style="right:955px;top:760px;font-size:14px;color:#8c8c8c">1.84 MB</div>
<svg class="abs" style="left:977px;top:759px" width="18" height="18" viewBox="0 0 18 18" fill="none" stroke="#8c8c8c" stroke-width="1.3"><path d="M9 2v10.5M4.5 8.5L9 13l4.5-4.5M2.5 16h13"/></svg>
<svg class="abs" style="left:552px;top:759px" width="16" height="18" viewBox="0 0 16 18" fill="none" stroke="#333" stroke-width="1.3" stroke-linejoin="round"><path d="M2.5 1h7.8L14.8 5.5v10a1.5 1.5 0 0 1-1.5 1.5H2.5A1.5 1.5 0 0 1 1 15.5v-13A1.5 1.5 0 0 1 2.5 1z"/><path d="M7 2.2l1.6 1-1.6 1 1.6 1-1.6 1 1.6 1-1.6 1 1.6 1" stroke-width="1"/><rect x="6.6" y="11.2" width="2.6" height="4" rx=".6" stroke-width="1.2"/></svg>
<div class="att" style="top:795px"></div>
<div class="abs" style="left:580px;top:804px;font-size:14px;color:#333">D133D468@F095A914.353F2368.png</div>
<div class="abs" style="right:985px;top:804px;font-size:14px;color:#8c8c8c">3.68 MB</div>
<svg class="abs" style="left:977px;top:803px" width="18" height="18" viewBox="0 0 18 18" fill="none" stroke="#8c8c8c" stroke-width="1.3"><path d="M9 2v10.5M4.5 8.5L9 13l4.5-4.5M2.5 16h13"/></svg>
<svg class="abs" style="left:946px;top:803px" width="20" height="18" viewBox="0 0 20 18" fill="none" stroke="#8c8c8c" stroke-width="1.3"><path d="M1 9c2.5-4 5.5-6 9-6s6.5 2 9 6c-2.5 4-5.5 6-9 6s-6.5-2-9-6z"/><circle cx="10" cy="9" r="2.6"/></svg>
<svg class="abs" style="left:551px;top:803px" width="18" height="18" viewBox="0 0 18 18" fill="none" stroke="#333" stroke-width="1.5"><rect x="1.5" y="2" width="15" height="14"/><path d="M1.5 14l5-5 4 4 2-2 4 4"/><circle cx="12" cy="6" r="1.2" fill="#333"/></svg>
<div class="att" style="top:839px"></div>
<div class="abs" style="left:580px;top:848px;font-size:14px;color:#333" ><span style="letter-spacing:0.29px">hero-background-campaign-alternate.png</span></div>
<div class="abs" style="right:985px;top:848px;font-size:14px;color:#8c8c8c">514.65 KB</div>
<svg class="abs" style="left:977px;top:847px" width="18" height="18" viewBox="0 0 18 18" fill="none" stroke="#8c8c8c" stroke-width="1.3"><path d="M9 2v10.5M4.5 8.5L9 13l4.5-4.5M2.5 16h13"/></svg>
<svg class="abs" style="left:946px;top:847px" width="20" height="18" viewBox="0 0 20 18" fill="none" stroke="#8c8c8c" stroke-width="1.3"><path d="M1 9c2.5-4 5.5-6 9-6s6.5 2 9 6c-2.5 4-5.5 6-9 6s-6.5-2-9-6z"/><circle cx="10" cy="9" r="2.6"/></svg>
<svg class="abs" style="left:551px;top:847px" width="18" height="18" viewBox="0 0 18 18" fill="none" stroke="#333" stroke-width="1.5"><rect x="1.5" y="2" width="15" height="14"/><path d="M1.5 14l5-5 4 4 2-2 4 4"/><circle cx="12" cy="6" r="1.2" fill="#333"/></svg>
<div class="att" style="top:883px"></div>
<div class="abs" style="left:580px;top:892px;font-size:14px;color:#333">散文片段_时间与记忆.txt</div>
<div class="abs" style="right:955px;top:892px;font-size:14px;color:#8c8c8c">2.34 KB</div>
<svg class="abs" style="left:977px;top:891px" width="18" height="18" viewBox="0 0 18 18" fill="none" stroke="#8c8c8c" stroke-width="1.3"><path d="M9 2v10.5M4.5 8.5L9 13l4.5-4.5M2.5 16h13"/></svg>
<svg class="abs" style="left:552px;top:891px" width="16" height="18" viewBox="0 0 16 18" fill="none" stroke="#333" stroke-width="1.3" stroke-linejoin="round"><path d="M2.5 1h7.8L14.8 5.5v10a1.5 1.5 0 0 1-1.5 1.5H2.5A1.5 1.5 0 0 1 1 15.5v-13A1.5 1.5 0 0 1 2.5 1z"/><path d="M4 8.5h8M4 11h8M4 13.5h5"/></svg>
</body></html>
